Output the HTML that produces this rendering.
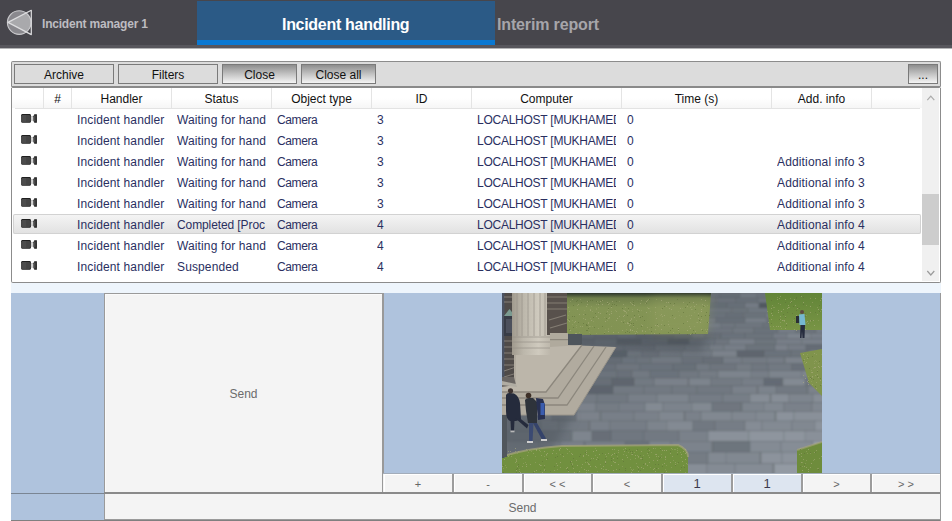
<!DOCTYPE html>
<html><head><meta charset="utf-8">
<style>
*{box-sizing:border-box;margin:0;padding:0}
html,body{width:952px;height:521px;overflow:hidden;background:#fff;font-family:"Liberation Sans",sans-serif;position:relative}
.a{position:absolute}
#hdr{left:0;top:0;width:952px;height:45px;background:#47464c}
#hdrline{left:0;top:45px;width:952px;height:3px;background:#57565c;box-shadow:0 1px 0 #b4b4b6}
#tab{left:197px;top:1px;width:298px;height:39px;background:#2b5a86}
#tabbar{left:197px;top:40px;width:298px;height:5px;background:#0a78d2}
.ttl{font-weight:bold;white-space:nowrap}
#tb{left:11px;top:61px;width:930px;height:27px;border-radius:2px;background:#dcdcdc;border:1px solid #8c8c8c;border-bottom:2px solid #8a8a8a}
.btn{position:absolute;top:2px;height:20px;border:1px solid #7a7a7a;background:#dcdcdc;font-size:12px;color:#111;text-align:center;line-height:20px}
.btn.g{background:linear-gradient(#8e8e8e,#c8c8c8 55%,#f4f4f4)}
#tbl{left:11px;top:88px;width:930px;height:195px;border:1px solid #8c8c8c;border-top:none;background:#fff;border-radius:0 0 2px 2px}
.hc{position:absolute;top:88px;height:20px;padding-top:1px;font-size:12px;color:#111;text-align:center;line-height:20px;border-left:1px solid #e4e4e4}
.row{position:absolute;left:13px;width:908px;height:21px;font-size:12px;color:#2a2f5f}
.c{position:absolute;top:1px;height:21px;line-height:21px;white-space:nowrap;overflow:hidden}
.cam{position:absolute;left:8px;top:5px;width:16px;height:9px}
#sb{left:922px;top:88px;width:17px;height:193px;background:#f0f0f0}
#thumb{left:922px;top:194px;width:17px;height:51px;background:#cdcdcd}
.hc{position:absolute;top:88px}
.row.sel{height:20px;background:linear-gradient(#f5f5f5,#e1e1e1);box-shadow:inset 0 0 0 1px #d2d2d2;border-radius:2px}
.send{font-size:12px;color:#6c6c6c;text-align:center;line-height:14px}
.pb{position:absolute;top:474px;height:18px;box-shadow:inset 1px 1px 0 #fff;font-size:11px;color:#666;text-align:center;line-height:21px}
.pb.blu{background:#dde5f0;font-size:13px;color:#3a3a4e;line-height:19px}
</style></head><body>
<div class="a" id="hdr"></div>
<div class="a" id="hdrline"></div>
<div class="a" id="tab"></div>
<div class="a" id="tabbar"></div>
<svg class="a" style="left:0;top:0" width="40" height="46" viewBox="0 0 40 46">
  <defs><clipPath id="lc"><circle cx="19.2" cy="22.6" r="11.8"/></clipPath></defs>
  <circle cx="19.2" cy="22.6" r="11.8" fill="#8a898e"/>
  <path d="M8 22.4 L31.3 10.3 L31.3 34.6 Z" fill="#a9a9ac" clip-path="url(#lc)"/>
  <circle cx="19.2" cy="22.6" r="11.8" fill="none" stroke="#c9c9cc" stroke-width="1.1"/>
  <path d="M8 22.4 L31.3 10.3 L31.3 34.6 Z" fill="none" stroke="#dedee0" stroke-width="1.2" stroke-linejoin="round"/>
</svg>
<div class="a ttl" style="left:42px;top:17px;font-size:12px;color:#bdbcc1;letter-spacing:-0.2px">Incident manager 1</div>
<div class="a ttl" style="left:282px;top:16px;font-size:16px;color:#fff;letter-spacing:-0.3px">Incident handling</div>
<div class="a ttl" style="left:497px;top:16px;font-size:16px;color:#a6a5aa;letter-spacing:-0.15px">Interim report</div>

<div class="a" id="tb">
  <div class="btn" style="left:2px;width:100px">Archive</div>
  <div class="btn" style="left:106px;width:100px">Filters</div>
  <div class="btn g" style="left:210px;width:75px">Close</div>
  <div class="btn g" style="left:289px;width:75px">Close all</div>
  <div class="btn g" style="left:896px;width:30px">...</div>
</div>

<div class="a" id="tbl"></div>
<div class="a" style="left:12px;top:88px;width:910px;height:20px;background:linear-gradient(#fff,#fff 50%,#f6f6f6)"></div>
<div class="a" style="left:15px;top:108px;width:905px;height:1px;background:#e3e3e3"></div>
<div class="hc" style="left:43px;width:28px">#</div>
<div class="hc" style="left:71px;width:100px">Handler</div>
<div class="hc" style="left:171px;width:100px">Status</div>
<div class="hc" style="left:271px;width:100px">Object type</div>
<div class="hc" style="left:371px;width:100px">ID</div>
<div class="hc" style="left:471px;width:150px">Computer</div>
<div class="hc" style="left:621px;width:150px">Time (s)</div>
<div class="hc" style="left:771px;width:100px">Add. info</div>
<div class="hc" style="left:871px;width:49px;border-right:none"></div>
<div class="a" id="sb"></div>
<div class="a" id="thumb"></div>
<svg class="a" style="left:924px;top:92px" width="14" height="12" viewBox="0 0 14 12"><path d="M3.3 8.2 L6.8 4.2 L10.3 8.2" fill="none" stroke="#ababab" stroke-width="1.2"/></svg>
<svg class="a" style="left:924px;top:267px" width="14" height="12" viewBox="0 0 14 12"><path d="M3.3 4 L6.8 8 L10.3 4" fill="none" stroke="#9a9a9a" stroke-width="1.2"/></svg>

<div class="a row" style="top:109px"><svg class="cam" width="16" height="9" viewBox="0 0 16 9"><rect x="0.2" y="0.1" width="9.7" height="8.7" rx="1.2" fill="#1f1f1f"/><rect x="1.1" y="1" width="7.9" height="6.9" rx="0.6" fill="#444"/><rect x="1.1" y="1" width="4" height="6.9" fill="#4c4c4c"/><rect x="9.9" y="2.2" width="2.5" height="4.4" fill="#b4b4b4"/><rect x="10.5" y="3" width="1.2" height="2.8" fill="#e6e6e6"/><path d="M12.4 2.2 L13.4 0.2 H15.9 V8.8 H13.4 L12.4 6.8 Z" fill="#1c1c1c"/><rect x="13.4" y="1.4" width="1" height="6.2" fill="#6a6a6a"/></svg><div class="c" style="left:64px;width:89px;letter-spacing:0.13px">Incident handler</div><div class="c" style="left:164px;width:89px;letter-spacing:0.13px">Waiting for handling</div><div class="c" style="left:264px;width:89px;letter-spacing:-0.4px">Camera</div><div class="c" style="left:364px;width:89px">3</div><div class="c" style="left:464px;width:139px;letter-spacing:-0.25px">LOCALHOST [MUKHAMEDOV]</div><div class="c" style="left:614px;width:139px">0</div></div>
<div class="a row" style="top:130px"><svg class="cam" width="16" height="9" viewBox="0 0 16 9"><rect x="0.2" y="0.1" width="9.7" height="8.7" rx="1.2" fill="#1f1f1f"/><rect x="1.1" y="1" width="7.9" height="6.9" rx="0.6" fill="#444"/><rect x="1.1" y="1" width="4" height="6.9" fill="#4c4c4c"/><rect x="9.9" y="2.2" width="2.5" height="4.4" fill="#b4b4b4"/><rect x="10.5" y="3" width="1.2" height="2.8" fill="#e6e6e6"/><path d="M12.4 2.2 L13.4 0.2 H15.9 V8.8 H13.4 L12.4 6.8 Z" fill="#1c1c1c"/><rect x="13.4" y="1.4" width="1" height="6.2" fill="#6a6a6a"/></svg><div class="c" style="left:64px;width:89px;letter-spacing:0.13px">Incident handler</div><div class="c" style="left:164px;width:89px;letter-spacing:0.13px">Waiting for handling</div><div class="c" style="left:264px;width:89px;letter-spacing:-0.4px">Camera</div><div class="c" style="left:364px;width:89px">3</div><div class="c" style="left:464px;width:139px;letter-spacing:-0.25px">LOCALHOST [MUKHAMEDOV]</div><div class="c" style="left:614px;width:139px">0</div></div>
<div class="a row" style="top:151px"><svg class="cam" width="16" height="9" viewBox="0 0 16 9"><rect x="0.2" y="0.1" width="9.7" height="8.7" rx="1.2" fill="#1f1f1f"/><rect x="1.1" y="1" width="7.9" height="6.9" rx="0.6" fill="#444"/><rect x="1.1" y="1" width="4" height="6.9" fill="#4c4c4c"/><rect x="9.9" y="2.2" width="2.5" height="4.4" fill="#b4b4b4"/><rect x="10.5" y="3" width="1.2" height="2.8" fill="#e6e6e6"/><path d="M12.4 2.2 L13.4 0.2 H15.9 V8.8 H13.4 L12.4 6.8 Z" fill="#1c1c1c"/><rect x="13.4" y="1.4" width="1" height="6.2" fill="#6a6a6a"/></svg><div class="c" style="left:64px;width:89px;letter-spacing:0.13px">Incident handler</div><div class="c" style="left:164px;width:89px;letter-spacing:0.13px">Waiting for handling</div><div class="c" style="left:264px;width:89px;letter-spacing:-0.4px">Camera</div><div class="c" style="left:364px;width:89px">3</div><div class="c" style="left:464px;width:139px;letter-spacing:-0.25px">LOCALHOST [MUKHAMEDOV]</div><div class="c" style="left:614px;width:139px">0</div><div class="c" style="left:764px;width:89px;letter-spacing:0.15px">Additional info 3</div></div>
<div class="a row" style="top:172px"><svg class="cam" width="16" height="9" viewBox="0 0 16 9"><rect x="0.2" y="0.1" width="9.7" height="8.7" rx="1.2" fill="#1f1f1f"/><rect x="1.1" y="1" width="7.9" height="6.9" rx="0.6" fill="#444"/><rect x="1.1" y="1" width="4" height="6.9" fill="#4c4c4c"/><rect x="9.9" y="2.2" width="2.5" height="4.4" fill="#b4b4b4"/><rect x="10.5" y="3" width="1.2" height="2.8" fill="#e6e6e6"/><path d="M12.4 2.2 L13.4 0.2 H15.9 V8.8 H13.4 L12.4 6.8 Z" fill="#1c1c1c"/><rect x="13.4" y="1.4" width="1" height="6.2" fill="#6a6a6a"/></svg><div class="c" style="left:64px;width:89px;letter-spacing:0.13px">Incident handler</div><div class="c" style="left:164px;width:89px;letter-spacing:0.13px">Waiting for handling</div><div class="c" style="left:264px;width:89px;letter-spacing:-0.4px">Camera</div><div class="c" style="left:364px;width:89px">3</div><div class="c" style="left:464px;width:139px;letter-spacing:-0.25px">LOCALHOST [MUKHAMEDOV]</div><div class="c" style="left:614px;width:139px">0</div><div class="c" style="left:764px;width:89px;letter-spacing:0.15px">Additional info 3</div></div>
<div class="a row" style="top:193px"><svg class="cam" width="16" height="9" viewBox="0 0 16 9"><rect x="0.2" y="0.1" width="9.7" height="8.7" rx="1.2" fill="#1f1f1f"/><rect x="1.1" y="1" width="7.9" height="6.9" rx="0.6" fill="#444"/><rect x="1.1" y="1" width="4" height="6.9" fill="#4c4c4c"/><rect x="9.9" y="2.2" width="2.5" height="4.4" fill="#b4b4b4"/><rect x="10.5" y="3" width="1.2" height="2.8" fill="#e6e6e6"/><path d="M12.4 2.2 L13.4 0.2 H15.9 V8.8 H13.4 L12.4 6.8 Z" fill="#1c1c1c"/><rect x="13.4" y="1.4" width="1" height="6.2" fill="#6a6a6a"/></svg><div class="c" style="left:64px;width:89px;letter-spacing:0.13px">Incident handler</div><div class="c" style="left:164px;width:89px;letter-spacing:0.13px">Waiting for handling</div><div class="c" style="left:264px;width:89px;letter-spacing:-0.4px">Camera</div><div class="c" style="left:364px;width:89px">3</div><div class="c" style="left:464px;width:139px;letter-spacing:-0.25px">LOCALHOST [MUKHAMEDOV]</div><div class="c" style="left:614px;width:139px">0</div><div class="c" style="left:764px;width:89px;letter-spacing:0.15px">Additional info 3</div></div>
<div class="a row sel" style="top:214px"><svg class="cam" width="16" height="9" viewBox="0 0 16 9"><rect x="0.2" y="0.1" width="9.7" height="8.7" rx="1.2" fill="#1f1f1f"/><rect x="1.1" y="1" width="7.9" height="6.9" rx="0.6" fill="#444"/><rect x="1.1" y="1" width="4" height="6.9" fill="#4c4c4c"/><rect x="9.9" y="2.2" width="2.5" height="4.4" fill="#b4b4b4"/><rect x="10.5" y="3" width="1.2" height="2.8" fill="#e6e6e6"/><path d="M12.4 2.2 L13.4 0.2 H15.9 V8.8 H13.4 L12.4 6.8 Z" fill="#1c1c1c"/><rect x="13.4" y="1.4" width="1" height="6.2" fill="#6a6a6a"/></svg><div class="c" style="left:64px;width:89px;letter-spacing:0.13px">Incident handler</div><div class="c" style="left:164px;width:88px;letter-spacing:-0.1px">Completed [Processed]</div><div class="c" style="left:264px;width:89px;letter-spacing:-0.4px">Camera</div><div class="c" style="left:364px;width:89px">4</div><div class="c" style="left:464px;width:139px;letter-spacing:-0.25px">LOCALHOST [MUKHAMEDOV]</div><div class="c" style="left:614px;width:139px">0</div><div class="c" style="left:764px;width:89px;letter-spacing:0.15px">Additional info 4</div></div>
<div class="a row" style="top:235px"><svg class="cam" width="16" height="9" viewBox="0 0 16 9"><rect x="0.2" y="0.1" width="9.7" height="8.7" rx="1.2" fill="#1f1f1f"/><rect x="1.1" y="1" width="7.9" height="6.9" rx="0.6" fill="#444"/><rect x="1.1" y="1" width="4" height="6.9" fill="#4c4c4c"/><rect x="9.9" y="2.2" width="2.5" height="4.4" fill="#b4b4b4"/><rect x="10.5" y="3" width="1.2" height="2.8" fill="#e6e6e6"/><path d="M12.4 2.2 L13.4 0.2 H15.9 V8.8 H13.4 L12.4 6.8 Z" fill="#1c1c1c"/><rect x="13.4" y="1.4" width="1" height="6.2" fill="#6a6a6a"/></svg><div class="c" style="left:64px;width:89px;letter-spacing:0.13px">Incident handler</div><div class="c" style="left:164px;width:89px;letter-spacing:0.13px">Waiting for handling</div><div class="c" style="left:264px;width:89px;letter-spacing:-0.4px">Camera</div><div class="c" style="left:364px;width:89px">4</div><div class="c" style="left:464px;width:139px;letter-spacing:-0.25px">LOCALHOST [MUKHAMEDOV]</div><div class="c" style="left:614px;width:139px">0</div><div class="c" style="left:764px;width:89px;letter-spacing:0.15px">Additional info 4</div></div>
<div class="a row" style="top:256px"><svg class="cam" width="16" height="9" viewBox="0 0 16 9"><rect x="0.2" y="0.1" width="9.7" height="8.7" rx="1.2" fill="#1f1f1f"/><rect x="1.1" y="1" width="7.9" height="6.9" rx="0.6" fill="#444"/><rect x="1.1" y="1" width="4" height="6.9" fill="#4c4c4c"/><rect x="9.9" y="2.2" width="2.5" height="4.4" fill="#b4b4b4"/><rect x="10.5" y="3" width="1.2" height="2.8" fill="#e6e6e6"/><path d="M12.4 2.2 L13.4 0.2 H15.9 V8.8 H13.4 L12.4 6.8 Z" fill="#1c1c1c"/><rect x="13.4" y="1.4" width="1" height="6.2" fill="#6a6a6a"/></svg><div class="c" style="left:64px;width:89px;letter-spacing:0.13px">Incident handler</div><div class="c" style="left:164px;width:89px;letter-spacing:0.13px">Suspended</div><div class="c" style="left:264px;width:89px;letter-spacing:-0.4px">Camera</div><div class="c" style="left:364px;width:89px">4</div><div class="c" style="left:464px;width:139px;letter-spacing:-0.25px">LOCALHOST [MUKHAMEDOV]</div><div class="c" style="left:614px;width:139px">0</div><div class="c" style="left:764px;width:89px;letter-spacing:0.15px">Additional info 4</div></div>


<div class="a" style="left:11px;top:283px;width:930px;height:10px;background:#eef5fc"></div>
<div class="a" style="left:11px;top:293px;width:930px;height:228px;background:#afc3dd"></div>
<div class="a" style="left:104px;top:293px;width:280px;height:200px;background:#f4f4f4;border-left:1px solid #9a9a9a;border-top:1px solid #9a9a9a;border-right:2px solid #999;box-shadow:inset 1px 1px 0 #fafafa"></div>
<div class="a send" style="left:104px;top:387px;width:279px">Send</div>
<div class="a" id="photo" style="left:502px;top:293px;width:320px;height:180px;background:#6e7479;overflow:hidden"><svg width="320" height="180" viewBox="0 0 320 180" style="position:absolute;left:0;top:0">
<defs>
<linearGradient id="gr1" x1="0" y1="0" x2="0" y2="1">
<stop offset="0" stop-color="#2c352c"/><stop offset="0.12" stop-color="#6f7f4c"/><stop offset="0.35" stop-color="#839455"/><stop offset="1" stop-color="#829353"/>
</linearGradient>
<linearGradient id="gr2" x1="0" y1="0" x2="0" y2="1">
<stop offset="0" stop-color="#628538"/><stop offset="1" stop-color="#789445"/>
</linearGradient>
<linearGradient id="pil" x1="0" y1="0" x2="1" y2="0">
<stop offset="0" stop-color="#a09a8e"/><stop offset="0.3" stop-color="#bcb7ab"/><stop offset="0.7" stop-color="#cfcabe"/><stop offset="1" stop-color="#bdb7ab"/>
</linearGradient>
<filter id="bl" x="-5%" y="-5%" width="110%" height="110%"><feGaussianBlur stdDeviation="0.8"/></filter>
<filter id="bl2" x="-20%" y="-20%" width="140%" height="140%"><feGaussianBlur stdDeviation="5"/></filter>
</defs>
<g stroke="#4f565d" stroke-width="0.6" stroke-opacity="0.35" filter="url(#bl)"><rect x="-14" y="0.0" width="15" height="5.0" fill="#5b626b"/><rect x="1" y="0.0" width="19" height="5.0" fill="#4f565f"/><rect x="20" y="0.0" width="21" height="5.0" fill="#585f68"/><rect x="41" y="0.0" width="14" height="5.0" fill="#626972"/><rect x="55" y="0.0" width="27" height="5.0" fill="#646b74"/><rect x="81" y="0.0" width="29" height="5.0" fill="#606770"/><rect x="110" y="0.0" width="19" height="5.0" fill="#616871"/><rect x="130" y="0.0" width="17" height="5.0" fill="#616871"/><rect x="147" y="0.0" width="14" height="5.0" fill="#5f666f"/><rect x="161" y="0.0" width="22" height="5.0" fill="#6d747d"/><rect x="183" y="0.0" width="19" height="5.0" fill="#565d66"/><rect x="202" y="0.0" width="16" height="5.0" fill="#666d76"/><rect x="218" y="0.0" width="20" height="5.0" fill="#656c75"/><rect x="238" y="0.0" width="17" height="5.0" fill="#707780"/><rect x="255" y="0.0" width="25" height="5.0" fill="#6b727b"/><rect x="280" y="0.0" width="28" height="5.0" fill="#747b84"/><rect x="307" y="0.0" width="17" height="5.0" fill="#717881"/><rect x="-5" y="5.0" width="15" height="5.0" fill="#5e656e"/><rect x="10" y="5.0" width="13" height="5.0" fill="#5a616a"/><rect x="23" y="5.0" width="28" height="5.0" fill="#585f68"/><rect x="50" y="5.0" width="25" height="5.0" fill="#5c636c"/><rect x="75" y="5.0" width="27" height="5.0" fill="#5a616a"/><rect x="102" y="5.0" width="21" height="5.0" fill="#5f666f"/><rect x="123" y="5.0" width="24" height="5.0" fill="#606770"/><rect x="146" y="5.0" width="27" height="5.0" fill="#626972"/><rect x="173" y="5.0" width="12" height="5.0" fill="#6b727b"/><rect x="185" y="5.0" width="15" height="5.0" fill="#686f78"/><rect x="200" y="5.0" width="14" height="5.0" fill="#697079"/><rect x="215" y="5.0" width="19" height="5.0" fill="#6a717a"/><rect x="234" y="5.0" width="22" height="5.0" fill="#686f78"/><rect x="256" y="5.0" width="27" height="5.0" fill="#6e757e"/><rect x="282" y="5.0" width="18" height="5.0" fill="#6a717a"/><rect x="301" y="5.0" width="29" height="5.0" fill="#717881"/><rect x="-15" y="10.0" width="21" height="5.0" fill="#616871"/><rect x="5" y="10.0" width="17" height="5.0" fill="#656c75"/><rect x="22" y="10.0" width="22" height="5.0" fill="#616871"/><rect x="44" y="10.0" width="24" height="5.0" fill="#5b626b"/><rect x="69" y="10.0" width="13" height="5.0" fill="#5d646d"/><rect x="82" y="10.0" width="26" height="5.0" fill="#666d76"/><rect x="108" y="10.0" width="19" height="5.0" fill="#4d545d"/><rect x="127" y="10.0" width="23" height="5.0" fill="#646b74"/><rect x="150" y="10.0" width="15" height="5.0" fill="#656c75"/><rect x="165" y="10.0" width="13" height="5.0" fill="#5c636c"/><rect x="178" y="10.0" width="19" height="5.0" fill="#596069"/><rect x="197" y="10.0" width="28" height="5.0" fill="#656c75"/><rect x="225" y="10.0" width="18" height="5.0" fill="#686f78"/><rect x="243" y="10.0" width="14" height="5.0" fill="#757c85"/><rect x="257" y="10.0" width="21" height="5.0" fill="#515861"/><rect x="278" y="10.0" width="14" height="5.0" fill="#6c737c"/><rect x="292" y="10.0" width="15" height="5.0" fill="#666d76"/><rect x="306" y="10.0" width="29" height="5.0" fill="#6d747d"/><rect x="-19" y="15.0" width="22" height="5.0" fill="#5e656e"/><rect x="2" y="15.0" width="28" height="5.0" fill="#5f666f"/><rect x="30" y="15.0" width="15" height="5.0" fill="#5e656e"/><rect x="45" y="15.0" width="22" height="5.0" fill="#646b74"/><rect x="66" y="15.0" width="27" height="5.0" fill="#5a616a"/><rect x="93" y="15.0" width="27" height="5.0" fill="#646b74"/><rect x="120" y="15.0" width="16" height="5.0" fill="#596069"/><rect x="136" y="15.0" width="18" height="5.0" fill="#656c75"/><rect x="155" y="15.0" width="17" height="5.0" fill="#666d76"/><rect x="171" y="15.0" width="29" height="5.0" fill="#5a616a"/><rect x="200" y="15.0" width="29" height="5.0" fill="#6d747d"/><rect x="230" y="15.0" width="16" height="5.0" fill="#6c737c"/><rect x="246" y="15.0" width="23" height="5.0" fill="#707780"/><rect x="269" y="15.0" width="27" height="5.0" fill="#666d76"/><rect x="296" y="15.0" width="14" height="5.0" fill="#717881"/><rect x="310" y="15.0" width="28" height="5.0" fill="#737a83"/><rect x="-16" y="20.0" width="26" height="5.0" fill="#565d66"/><rect x="10" y="20.0" width="26" height="5.0" fill="#676e77"/><rect x="36" y="20.0" width="29" height="5.0" fill="#626972"/><rect x="65" y="20.0" width="15" height="5.0" fill="#626972"/><rect x="80" y="20.0" width="27" height="5.0" fill="#636a73"/><rect x="107" y="20.0" width="27" height="5.0" fill="#6b727b"/><rect x="134" y="20.0" width="22" height="5.0" fill="#646b74"/><rect x="156" y="20.0" width="12" height="5.0" fill="#6e757e"/><rect x="168" y="20.0" width="29" height="5.0" fill="#666d76"/><rect x="197" y="20.0" width="28" height="5.0" fill="#6b727b"/><rect x="224" y="20.0" width="17" height="5.0" fill="#686f78"/><rect x="242" y="20.0" width="23" height="5.0" fill="#6c737c"/><rect x="264" y="20.0" width="28" height="5.0" fill="#747b84"/><rect x="293" y="20.0" width="20" height="5.0" fill="#666d76"/><rect x="313" y="20.0" width="29" height="5.0" fill="#6c737c"/><rect x="-9" y="25.0" width="21" height="5.0" fill="#676e77"/><rect x="12" y="25.0" width="12" height="5.0" fill="#636a73"/><rect x="24" y="25.0" width="15" height="5.0" fill="#5a616a"/><rect x="39" y="25.0" width="18" height="5.0" fill="#666d76"/><rect x="57" y="25.0" width="22" height="5.0" fill="#666d76"/><rect x="79" y="25.0" width="16" height="5.0" fill="#5f666f"/><rect x="96" y="25.0" width="26" height="5.0" fill="#5c636c"/><rect x="121" y="25.0" width="28" height="5.0" fill="#646b74"/><rect x="150" y="25.0" width="23" height="5.0" fill="#606770"/><rect x="173" y="25.0" width="20" height="5.0" fill="#686f78"/><rect x="193" y="25.0" width="21" height="5.0" fill="#727982"/><rect x="214" y="25.0" width="29" height="5.0" fill="#686f78"/><rect x="243" y="25.0" width="22" height="5.0" fill="#777e87"/><rect x="265" y="25.0" width="14" height="5.0" fill="#6c737c"/><rect x="279" y="25.0" width="13" height="5.0" fill="#707780"/><rect x="292" y="25.0" width="26" height="5.0" fill="#737a83"/><rect x="318" y="25.0" width="15" height="5.0" fill="#727982"/><rect x="-2" y="30.0" width="29" height="5.0" fill="#5a616a"/><rect x="27" y="30.0" width="29" height="5.0" fill="#5f666f"/><rect x="56" y="30.0" width="27" height="5.0" fill="#6a717a"/><rect x="83" y="30.0" width="20" height="5.0" fill="#5d646d"/><rect x="103" y="30.0" width="18" height="5.0" fill="#636a73"/><rect x="121" y="30.0" width="12" height="5.0" fill="#535a63"/><rect x="133" y="30.0" width="18" height="5.0" fill="#646b74"/><rect x="151" y="30.0" width="21" height="5.0" fill="#767d86"/><rect x="172" y="30.0" width="29" height="5.0" fill="#626972"/><rect x="202" y="30.0" width="17" height="5.0" fill="#757c85"/><rect x="219" y="30.0" width="14" height="5.0" fill="#6f767f"/><rect x="233" y="30.0" width="28" height="5.0" fill="#6f767f"/><rect x="261" y="30.0" width="29" height="5.0" fill="#6c737c"/><rect x="290" y="30.0" width="25" height="5.0" fill="#747b84"/><rect x="314" y="30.0" width="20" height="5.0" fill="#686f78"/><rect x="-1" y="35.0" width="23" height="5.2" fill="#646b74"/><rect x="22" y="35.0" width="13" height="5.2" fill="#626972"/><rect x="35" y="35.0" width="20" height="5.2" fill="#626972"/><rect x="56" y="35.0" width="17" height="5.2" fill="#6d747d"/><rect x="72" y="35.0" width="21" height="5.2" fill="#636a73"/><rect x="94" y="35.0" width="13" height="5.2" fill="#676e77"/><rect x="107" y="35.0" width="18" height="5.2" fill="#626972"/><rect x="124" y="35.0" width="21" height="5.2" fill="#6f767f"/><rect x="145" y="35.0" width="18" height="5.2" fill="#5f666f"/><rect x="164" y="35.0" width="25" height="5.2" fill="#6a717a"/><rect x="189" y="35.0" width="15" height="5.2" fill="#515861"/><rect x="204" y="35.0" width="27" height="5.2" fill="#6e757e"/><rect x="231" y="35.0" width="21" height="5.2" fill="#717881"/><rect x="252" y="35.0" width="24" height="5.2" fill="#6b727b"/><rect x="276" y="35.0" width="18" height="5.2" fill="#767d86"/><rect x="294" y="35.0" width="19" height="5.2" fill="#6c737c"/><rect x="314" y="35.0" width="13" height="5.2" fill="#767d86"/><rect x="-15" y="40.2" width="15" height="5.5" fill="#575e67"/><rect x="0" y="40.2" width="27" height="5.5" fill="#697079"/><rect x="27" y="40.2" width="16" height="5.5" fill="#606770"/><rect x="44" y="40.2" width="20" height="5.5" fill="#6a717a"/><rect x="64" y="40.2" width="29" height="5.5" fill="#686f78"/><rect x="93" y="40.2" width="22" height="5.5" fill="#656c75"/><rect x="115" y="40.2" width="18" height="5.5" fill="#686f78"/><rect x="134" y="40.2" width="19" height="5.5" fill="#616871"/><rect x="152" y="40.2" width="21" height="5.5" fill="#5d646d"/><rect x="174" y="40.2" width="17" height="5.5" fill="#626972"/><rect x="190" y="40.2" width="12" height="5.5" fill="#6f767f"/><rect x="203" y="40.2" width="16" height="5.5" fill="#676e77"/><rect x="219" y="40.2" width="24" height="5.5" fill="#6b727b"/><rect x="243" y="40.2" width="28" height="5.5" fill="#6c737c"/><rect x="271" y="40.2" width="15" height="5.5" fill="#757c85"/><rect x="285" y="40.2" width="24" height="5.5" fill="#7d848d"/><rect x="309" y="40.2" width="23" height="5.5" fill="#787f88"/><rect x="-4" y="45.8" width="15" height="5.8" fill="#5e656e"/><rect x="11" y="45.8" width="27" height="5.8" fill="#646b74"/><rect x="38" y="45.8" width="23" height="5.8" fill="#6e757e"/><rect x="61" y="45.8" width="17" height="5.8" fill="#515861"/><rect x="78" y="45.8" width="15" height="5.8" fill="#636a73"/><rect x="92" y="45.8" width="23" height="5.8" fill="#686f78"/><rect x="115" y="45.8" width="24" height="5.8" fill="#585f68"/><rect x="139" y="45.8" width="27" height="5.8" fill="#636a73"/><rect x="166" y="45.8" width="22" height="5.8" fill="#565d66"/><rect x="187" y="45.8" width="26" height="5.8" fill="#6b727b"/><rect x="213" y="45.8" width="14" height="5.8" fill="#6e757e"/><rect x="227" y="45.8" width="26" height="5.8" fill="#787f88"/><rect x="253" y="45.8" width="21" height="5.8" fill="#6d747d"/><rect x="274" y="45.8" width="26" height="5.8" fill="#777e87"/><rect x="300" y="45.8" width="24" height="5.8" fill="#787f88"/><rect x="-5" y="51.6" width="18" height="6.1" fill="#676e77"/><rect x="13" y="51.6" width="13" height="6.1" fill="#6b727b"/><rect x="26" y="51.6" width="26" height="6.1" fill="#697079"/><rect x="52" y="51.6" width="18" height="6.1" fill="#636a73"/><rect x="70" y="51.6" width="15" height="6.1" fill="#646b74"/><rect x="84" y="51.6" width="16" height="6.1" fill="#666d76"/><rect x="101" y="51.6" width="21" height="6.1" fill="#656c75"/><rect x="122" y="51.6" width="31" height="6.1" fill="#656c75"/><rect x="153" y="51.6" width="30" height="6.1" fill="#6c737c"/><rect x="183" y="51.6" width="24" height="6.1" fill="#717881"/><rect x="207" y="51.6" width="15" height="6.1" fill="#747b84"/><rect x="222" y="51.6" width="22" height="6.1" fill="#777e87"/><rect x="244" y="51.6" width="29" height="6.1" fill="#6c737c"/><rect x="273" y="51.6" width="13" height="6.1" fill="#7a818a"/><rect x="286" y="51.6" width="18" height="6.1" fill="#757c85"/><rect x="304" y="51.6" width="19" height="6.1" fill="#656c75"/><rect x="-5" y="57.6" width="29" height="6.4" fill="#707780"/><rect x="24" y="57.6" width="31" height="6.4" fill="#666d76"/><rect x="55" y="57.6" width="20" height="6.4" fill="#5f666f"/><rect x="75" y="57.6" width="32" height="6.4" fill="#626972"/><rect x="107" y="57.6" width="18" height="6.4" fill="#596069"/><rect x="125" y="57.6" width="15" height="6.4" fill="#6c737c"/><rect x="140" y="57.6" width="18" height="6.4" fill="#676e77"/><rect x="157" y="57.6" width="23" height="6.4" fill="#6e757e"/><rect x="180" y="57.6" width="30" height="6.4" fill="#737a83"/><rect x="210" y="57.6" width="25" height="6.4" fill="#7b828b"/><rect x="235" y="57.6" width="27" height="6.4" fill="#5e656e"/><rect x="262" y="57.6" width="27" height="6.4" fill="#6b727b"/><rect x="289" y="57.6" width="18" height="6.4" fill="#6c737c"/><rect x="307" y="57.6" width="31" height="6.4" fill="#7c838c"/><rect x="-14" y="64.0" width="28" height="6.7" fill="#6b727b"/><rect x="14" y="64.0" width="18" height="6.7" fill="#666d76"/><rect x="32" y="64.0" width="21" height="6.7" fill="#666d76"/><rect x="53" y="64.0" width="16" height="6.7" fill="#6f767f"/><rect x="69" y="64.0" width="17" height="6.7" fill="#727982"/><rect x="87" y="64.0" width="33" height="6.7" fill="#656c75"/><rect x="120" y="64.0" width="15" height="6.7" fill="#6b727b"/><rect x="134" y="64.0" width="15" height="6.7" fill="#6c737c"/><rect x="149" y="64.0" width="31" height="6.7" fill="#717881"/><rect x="180" y="64.0" width="21" height="6.7" fill="#697079"/><rect x="201" y="64.0" width="20" height="6.7" fill="#676e77"/><rect x="221" y="64.0" width="19" height="6.7" fill="#757c85"/><rect x="240" y="64.0" width="26" height="6.7" fill="#737a83"/><rect x="265" y="64.0" width="17" height="6.7" fill="#757c85"/><rect x="283" y="64.0" width="22" height="6.7" fill="#7b828b"/><rect x="305" y="64.0" width="30" height="6.7" fill="#6c737c"/><rect x="-6" y="70.7" width="32" height="7.0" fill="#676e77"/><rect x="26" y="70.7" width="25" height="7.0" fill="#707780"/><rect x="51" y="70.7" width="30" height="7.0" fill="#6c737c"/><rect x="81" y="70.7" width="33" height="7.0" fill="#697079"/><rect x="114" y="70.7" width="24" height="7.0" fill="#6e757e"/><rect x="138" y="70.7" width="33" height="7.0" fill="#6b727b"/><rect x="171" y="70.7" width="23" height="7.0" fill="#686f78"/><rect x="194" y="70.7" width="14" height="7.0" fill="#727982"/><rect x="208" y="70.7" width="27" height="7.0" fill="#6e757e"/><rect x="234" y="70.7" width="16" height="7.0" fill="#747b84"/><rect x="250" y="70.7" width="16" height="7.0" fill="#707780"/><rect x="266" y="70.7" width="24" height="7.0" fill="#727982"/><rect x="290" y="70.7" width="26" height="7.0" fill="#697079"/><rect x="316" y="70.7" width="20" height="7.0" fill="#6d747d"/><rect x="-2" y="77.7" width="24" height="7.4" fill="#6d747d"/><rect x="21" y="77.7" width="19" height="7.4" fill="#747b84"/><rect x="40" y="77.7" width="14" height="7.4" fill="#6b727b"/><rect x="55" y="77.7" width="28" height="7.4" fill="#6a717a"/><rect x="82" y="77.7" width="33" height="7.4" fill="#6c737c"/><rect x="115" y="77.7" width="15" height="7.4" fill="#697079"/><rect x="130" y="77.7" width="18" height="7.4" fill="#727982"/><rect x="148" y="77.7" width="29" height="7.4" fill="#6b727b"/><rect x="177" y="77.7" width="20" height="7.4" fill="#717881"/><rect x="197" y="77.7" width="19" height="7.4" fill="#747b84"/><rect x="216" y="77.7" width="34" height="7.4" fill="#7d848d"/><rect x="249" y="77.7" width="18" height="7.4" fill="#777e87"/><rect x="267" y="77.7" width="33" height="7.4" fill="#7d848d"/><rect x="300" y="77.7" width="22" height="7.4" fill="#7e858e"/><rect x="-19" y="85.1" width="15" height="7.8" fill="#787f88"/><rect x="-4" y="85.1" width="33" height="7.8" fill="#717881"/><rect x="30" y="85.1" width="34" height="7.8" fill="#676e77"/><rect x="64" y="85.1" width="18" height="7.8" fill="#656c75"/><rect x="82" y="85.1" width="28" height="7.8" fill="#676e77"/><rect x="110" y="85.1" width="22" height="7.8" fill="#5e656e"/><rect x="132" y="85.1" width="20" height="7.8" fill="#727982"/><rect x="152" y="85.1" width="34" height="7.8" fill="#7a818a"/><rect x="187" y="85.1" width="22" height="7.8" fill="#7d848d"/><rect x="209" y="85.1" width="32" height="7.8" fill="#737a83"/><rect x="240" y="85.1" width="22" height="7.8" fill="#777e87"/><rect x="262" y="85.1" width="18" height="7.8" fill="#646b74"/><rect x="281" y="85.1" width="23" height="7.8" fill="#838a93"/><rect x="303" y="85.1" width="30" height="7.8" fill="#707780"/><rect x="-2" y="92.9" width="20" height="8.1" fill="#6c737c"/><rect x="19" y="92.9" width="34" height="8.1" fill="#6b727b"/><rect x="53" y="92.9" width="28" height="8.1" fill="#747b84"/><rect x="81" y="92.9" width="30" height="8.1" fill="#5d646d"/><rect x="111" y="92.9" width="31" height="8.1" fill="#727982"/><rect x="142" y="92.9" width="28" height="8.1" fill="#727982"/><rect x="170" y="92.9" width="25" height="8.1" fill="#727982"/><rect x="195" y="92.9" width="35" height="8.1" fill="#717881"/><rect x="230" y="92.9" width="25" height="8.1" fill="#7a818a"/><rect x="256" y="92.9" width="19" height="8.1" fill="#7c838c"/><rect x="274" y="92.9" width="31" height="8.1" fill="#727982"/><rect x="306" y="92.9" width="22" height="8.1" fill="#7b828b"/><rect x="-18" y="101.0" width="19" height="8.6" fill="#717881"/><rect x="1" y="101.0" width="20" height="8.6" fill="#6f767f"/><rect x="21" y="101.0" width="22" height="8.6" fill="#6f767f"/><rect x="44" y="101.0" width="35" height="8.6" fill="#686f78"/><rect x="78" y="101.0" width="17" height="8.6" fill="#737a83"/><rect x="95" y="101.0" width="31" height="8.6" fill="#717881"/><rect x="126" y="101.0" width="29" height="8.6" fill="#787f88"/><rect x="155" y="101.0" width="32" height="8.6" fill="#7d848d"/><rect x="187" y="101.0" width="34" height="8.6" fill="#757c85"/><rect x="221" y="101.0" width="28" height="8.6" fill="#777e87"/><rect x="248" y="101.0" width="20" height="8.6" fill="#868d96"/><rect x="269" y="101.0" width="18" height="8.6" fill="#878e97"/><rect x="287" y="101.0" width="24" height="8.6" fill="#7e858e"/><rect x="311" y="101.0" width="26" height="8.6" fill="#868d96"/><rect x="-0" y="109.6" width="18" height="9.0" fill="#787f88"/><rect x="18" y="109.6" width="34" height="9.0" fill="#697079"/><rect x="52" y="109.6" width="22" height="9.0" fill="#5b626b"/><rect x="74" y="109.6" width="20" height="9.0" fill="#7b828b"/><rect x="94" y="109.6" width="24" height="9.0" fill="#747b84"/><rect x="117" y="109.6" width="26" height="9.0" fill="#777e87"/><rect x="143" y="109.6" width="18" height="9.0" fill="#838a93"/><rect x="161" y="109.6" width="30" height="9.0" fill="#7c838c"/><rect x="190" y="109.6" width="20" height="9.0" fill="#828992"/><rect x="210" y="109.6" width="29" height="9.0" fill="#6f767f"/><rect x="240" y="109.6" width="23" height="9.0" fill="#7d848d"/><rect x="262" y="109.6" width="20" height="9.0" fill="#818891"/><rect x="282" y="109.6" width="28" height="9.0" fill="#7a818a"/><rect x="310" y="109.6" width="18" height="9.0" fill="#808790"/><rect x="-18" y="118.6" width="20" height="9.4" fill="#737a83"/><rect x="1" y="118.6" width="25" height="9.4" fill="#6f767f"/><rect x="27" y="118.6" width="23" height="9.4" fill="#777e87"/><rect x="50" y="118.6" width="24" height="9.4" fill="#6a717a"/><rect x="74" y="118.6" width="24" height="9.4" fill="#7b828b"/><rect x="99" y="118.6" width="33" height="9.4" fill="#787f88"/><rect x="132" y="118.6" width="26" height="9.4" fill="#7a818a"/><rect x="157" y="118.6" width="25" height="9.4" fill="#808790"/><rect x="183" y="118.6" width="16" height="9.4" fill="#7a818a"/><rect x="199" y="118.6" width="31" height="9.4" fill="#818891"/><rect x="230" y="118.6" width="25" height="9.4" fill="#808790"/><rect x="254" y="118.6" width="19" height="9.4" fill="#828992"/><rect x="274" y="118.6" width="18" height="9.4" fill="#8b929b"/><rect x="292" y="118.6" width="35" height="9.4" fill="#899099"/><rect x="-1" y="128.0" width="40" height="9.9" fill="#717881"/><rect x="39" y="128.0" width="18" height="9.9" fill="#798089"/><rect x="56" y="128.0" width="31" height="9.9" fill="#737a83"/><rect x="88" y="128.0" width="20" height="9.9" fill="#798089"/><rect x="108" y="128.0" width="37" height="9.9" fill="#767d86"/><rect x="145" y="128.0" width="21" height="9.9" fill="#7d848d"/><rect x="165" y="128.0" width="26" height="9.9" fill="#838a93"/><rect x="191" y="128.0" width="22" height="9.9" fill="#717881"/><rect x="213" y="128.0" width="30" height="9.9" fill="#767d86"/><rect x="243" y="128.0" width="17" height="9.9" fill="#858c95"/><rect x="260" y="128.0" width="30" height="9.9" fill="#838a93"/><rect x="290" y="128.0" width="24" height="9.9" fill="#818891"/><rect x="313" y="128.0" width="32" height="9.9" fill="#8c939c"/><rect x="-11" y="137.9" width="17" height="10.4" fill="#6d747d"/><rect x="6" y="137.9" width="36" height="10.4" fill="#6f767f"/><rect x="42" y="137.9" width="28" height="10.4" fill="#6c737c"/><rect x="70" y="137.9" width="20" height="10.4" fill="#7e858e"/><rect x="90" y="137.9" width="19" height="10.4" fill="#676e77"/><rect x="109" y="137.9" width="33" height="10.4" fill="#707780"/><rect x="142" y="137.9" width="35" height="10.4" fill="#727982"/><rect x="177" y="137.9" width="29" height="10.4" fill="#7a818a"/><rect x="206" y="137.9" width="41" height="10.4" fill="#8a919a"/><rect x="247" y="137.9" width="35" height="10.4" fill="#8e959e"/><rect x="282" y="137.9" width="22" height="10.4" fill="#8e959e"/><rect x="303" y="137.9" width="40" height="10.4" fill="#899099"/><rect x="-4" y="148.3" width="41" height="10.9" fill="#798089"/><rect x="37" y="148.3" width="21" height="10.9" fill="#798089"/><rect x="58" y="148.3" width="24" height="10.9" fill="#7a818a"/><rect x="83" y="148.3" width="41" height="10.9" fill="#787f88"/><rect x="123" y="148.3" width="24" height="10.9" fill="#6c737c"/><rect x="147" y="148.3" width="22" height="10.9" fill="#7f868f"/><rect x="169" y="148.3" width="41" height="10.9" fill="#7c838c"/><rect x="211" y="148.3" width="37" height="10.9" fill="#6d747d"/><rect x="248" y="148.3" width="31" height="10.9" fill="#848b94"/><rect x="279" y="148.3" width="32" height="10.9" fill="#868d96"/><rect x="311" y="148.3" width="40" height="10.9" fill="#9aa1aa"/><rect x="-12" y="159.2" width="39" height="11.5" fill="#808790"/><rect x="27" y="159.2" width="44" height="11.5" fill="#747b84"/><rect x="71" y="159.2" width="29" height="11.5" fill="#798089"/><rect x="100" y="159.2" width="37" height="11.5" fill="#888f98"/><rect x="138" y="159.2" width="35" height="11.5" fill="#848b94"/><rect x="173" y="159.2" width="33" height="11.5" fill="#747b84"/><rect x="206" y="159.2" width="19" height="11.5" fill="#828992"/><rect x="224" y="159.2" width="34" height="11.5" fill="#818891"/><rect x="259" y="159.2" width="21" height="11.5" fill="#8c939c"/><rect x="280" y="159.2" width="35" height="11.5" fill="#8c939c"/><rect x="315" y="159.2" width="21" height="11.5" fill="#8e959e"/><rect x="-16" y="170.7" width="34" height="12.0" fill="#747b84"/><rect x="19" y="170.7" width="31" height="12.0" fill="#777e87"/><rect x="50" y="170.7" width="44" height="12.0" fill="#6f767f"/><rect x="94" y="170.7" width="36" height="12.0" fill="#828992"/><rect x="130" y="170.7" width="40" height="12.0" fill="#717881"/><rect x="169" y="170.7" width="36" height="12.0" fill="#878e97"/><rect x="205" y="170.7" width="28" height="12.0" fill="#848b94"/><rect x="233" y="170.7" width="38" height="12.0" fill="#858c95"/><rect x="272" y="170.7" width="43" height="12.0" fill="#939aa3"/><rect x="315" y="170.7" width="25" height="12.0" fill="#848b94"/></g>
<path d="M0 122 L72 122 L60 140 L50 160 L0 165 Z" fill="#4e555c" opacity="0.5" filter="url(#bl2)"/>
<path d="M66 41 L206 41 L200 60 L114 54 L66 52 Z" fill="#474e55" opacity="0.45" filter="url(#bl2)"/>
<!-- grass upper left -->
<path d="M58 0 L209 0 L206 41 L66 42 L58 40 Z" fill="url(#gr1)"/>
<!-- grass upper right -->
<path d="M263 0 L320 0 L320 37 L268 37 Z" fill="url(#gr2)"/>
<path d="M150 4 L209 3 L206 41 L150 41 Z" fill="#94a062" opacity="0.35" filter="url(#bl2)"/>
<!-- grass right middle -->
<path d="M298 60 L320 56 L320 103 L307 90 Z" fill="#80944c"/>
<!-- grass bottom left -->
<path d="M0 164 Q20 156 60 153 L176 152 Q186 156 186 164 L186 180 L0 180 Z" fill="#71903f"/>
<path d="M0 164 Q20 156 60 153 L176 152 Q186 156 186 164" fill="none" stroke="#a6a57c" stroke-width="2" opacity="0.7"/>
<!-- grass bottom right -->
<path d="M295 157 L320 149 L320 180 L295 180 Z" fill="#6e8c3c"/>
<path d="M295 157 L320 149" fill="none" stroke="#a6a57c" stroke-width="2" opacity="0.6"/>
<g opacity="0.55"><rect x="94" y="23" width="1" height="1" fill="#b3b287"/><rect x="196" y="20" width="1" height="1" fill="#a9ad7a"/><rect x="149" y="38" width="1" height="1" fill="#5e7038"/><rect x="97" y="10" width="1" height="1" fill="#5e7038"/><rect x="140" y="23" width="1" height="1" fill="#5e7038"/><rect x="154" y="6" width="1" height="1" fill="#9aa46a"/><rect x="189" y="22" width="1" height="1" fill="#a9ad7a"/><rect x="172" y="25" width="1" height="1" fill="#b3b287"/><rect x="176" y="35" width="1" height="1" fill="#b3b287"/><rect x="129" y="30" width="1" height="1" fill="#5e7038"/><rect x="166" y="39" width="1" height="1" fill="#5e7038"/><rect x="168" y="24" width="1" height="1" fill="#9aa46a"/><rect x="79" y="9" width="1" height="1" fill="#5e7038"/><rect x="176" y="36" width="1" height="1" fill="#5e7038"/><rect x="135" y="16" width="1" height="1" fill="#b3b287"/><rect x="139" y="17" width="1" height="1" fill="#9aa46a"/><rect x="195" y="29" width="1" height="1" fill="#a9ad7a"/><rect x="159" y="7" width="1" height="1" fill="#b3b287"/><rect x="204" y="38" width="1" height="1" fill="#a9ad7a"/><rect x="166" y="9" width="1" height="1" fill="#b3b287"/><rect x="71" y="34" width="1" height="1" fill="#5e7038"/><rect x="122" y="17" width="1" height="1" fill="#a9ad7a"/><rect x="65" y="26" width="1" height="1" fill="#a9ad7a"/><rect x="115" y="25" width="1" height="1" fill="#b3b287"/><rect x="88" y="17" width="1" height="1" fill="#b3b287"/><rect x="189" y="13" width="1" height="1" fill="#9aa46a"/><rect x="193" y="16" width="1" height="1" fill="#5e7038"/><rect x="189" y="16" width="1" height="1" fill="#a9ad7a"/><rect x="152" y="40" width="1" height="1" fill="#b3b287"/><rect x="123" y="30" width="1" height="1" fill="#9aa46a"/><rect x="199" y="18" width="1" height="1" fill="#b3b287"/><rect x="137" y="23" width="1" height="1" fill="#a9ad7a"/><rect x="106" y="16" width="1" height="1" fill="#9aa46a"/><rect x="67" y="26" width="1" height="1" fill="#5e7038"/><rect x="111" y="39" width="1" height="1" fill="#b3b287"/><rect x="67" y="28" width="1" height="1" fill="#b3b287"/><rect x="96" y="19" width="1" height="1" fill="#b3b287"/><rect x="85" y="8" width="1" height="1" fill="#b3b287"/><rect x="185" y="11" width="1" height="1" fill="#5e7038"/><rect x="74" y="34" width="1" height="1" fill="#9aa46a"/><rect x="105" y="9" width="1" height="1" fill="#b3b287"/><rect x="94" y="8" width="1" height="1" fill="#5e7038"/><rect x="149" y="40" width="1" height="1" fill="#9aa46a"/><rect x="124" y="36" width="1" height="1" fill="#9aa46a"/><rect x="70" y="31" width="1" height="1" fill="#9aa46a"/><rect x="192" y="19" width="1" height="1" fill="#9aa46a"/><rect x="203" y="13" width="1" height="1" fill="#9aa46a"/><rect x="188" y="14" width="1" height="1" fill="#a9ad7a"/><rect x="180" y="15" width="1" height="1" fill="#9aa46a"/><rect x="122" y="22" width="1" height="1" fill="#b3b287"/><rect x="128" y="27" width="1" height="1" fill="#b3b287"/><rect x="121" y="17" width="1" height="1" fill="#5e7038"/><rect x="200" y="37" width="1" height="1" fill="#5e7038"/><rect x="127" y="32" width="1" height="1" fill="#b3b287"/><rect x="140" y="37" width="1" height="1" fill="#a9ad7a"/><rect x="188" y="41" width="1" height="1" fill="#a9ad7a"/><rect x="194" y="29" width="1" height="1" fill="#9aa46a"/><rect x="193" y="38" width="1" height="1" fill="#a9ad7a"/><rect x="84" y="13" width="1" height="1" fill="#a9ad7a"/><rect x="137" y="17" width="1" height="1" fill="#a9ad7a"/><rect x="110" y="11" width="1" height="1" fill="#5e7038"/><rect x="94" y="11" width="1" height="1" fill="#9aa46a"/><rect x="153" y="36" width="1" height="1" fill="#a9ad7a"/><rect x="172" y="10" width="1" height="1" fill="#5e7038"/><rect x="66" y="14" width="1" height="1" fill="#a9ad7a"/><rect x="187" y="33" width="1" height="1" fill="#a9ad7a"/><rect x="205" y="36" width="1" height="1" fill="#a9ad7a"/><rect x="136" y="21" width="1" height="1" fill="#9aa46a"/><rect x="106" y="15" width="1" height="1" fill="#5e7038"/><rect x="147" y="15" width="1" height="1" fill="#9aa46a"/><rect x="167" y="33" width="1" height="1" fill="#9aa46a"/><rect x="64" y="19" width="1" height="1" fill="#5e7038"/><rect x="153" y="32" width="1" height="1" fill="#b3b287"/><rect x="121" y="29" width="1" height="1" fill="#5e7038"/><rect x="61" y="9" width="1" height="1" fill="#b3b287"/><rect x="122" y="18" width="1" height="1" fill="#a9ad7a"/><rect x="199" y="16" width="1" height="1" fill="#b3b287"/><rect x="76" y="29" width="1" height="1" fill="#5e7038"/><rect x="159" y="31" width="1" height="1" fill="#a9ad7a"/><rect x="181" y="30" width="1" height="1" fill="#5e7038"/><rect x="80" y="33" width="1" height="1" fill="#a9ad7a"/><rect x="138" y="24" width="1" height="1" fill="#5e7038"/><rect x="185" y="28" width="1" height="1" fill="#b3b287"/><rect x="145" y="34" width="1" height="1" fill="#a9ad7a"/><rect x="138" y="10" width="1" height="1" fill="#a9ad7a"/><rect x="107" y="24" width="1" height="1" fill="#a9ad7a"/><rect x="95" y="8" width="1" height="1" fill="#9aa46a"/><rect x="127" y="29" width="1" height="1" fill="#5e7038"/><rect x="96" y="25" width="1" height="1" fill="#b3b287"/><rect x="142" y="41" width="1" height="1" fill="#5e7038"/><rect x="134" y="41" width="1" height="1" fill="#5e7038"/><rect x="185" y="41" width="1" height="1" fill="#5e7038"/><rect x="162" y="32" width="1" height="1" fill="#5e7038"/><rect x="82" y="17" width="1" height="1" fill="#9aa46a"/><rect x="83" y="21" width="1" height="1" fill="#5e7038"/><rect x="196" y="22" width="1" height="1" fill="#5e7038"/><rect x="147" y="36" width="1" height="1" fill="#9aa46a"/><rect x="98" y="8" width="1" height="1" fill="#b3b287"/><rect x="199" y="36" width="1" height="1" fill="#b3b287"/><rect x="159" y="36" width="1" height="1" fill="#b3b287"/><rect x="192" y="13" width="1" height="1" fill="#b3b287"/><rect x="130" y="16" width="1" height="1" fill="#9aa46a"/><rect x="144" y="10" width="1" height="1" fill="#5e7038"/><rect x="175" y="6" width="1" height="1" fill="#5e7038"/><rect x="164" y="9" width="1" height="1" fill="#a9ad7a"/><rect x="131" y="30" width="1" height="1" fill="#5e7038"/><rect x="176" y="37" width="1" height="1" fill="#a9ad7a"/><rect x="129" y="10" width="1" height="1" fill="#9aa46a"/><rect x="156" y="33" width="1" height="1" fill="#a9ad7a"/><rect x="203" y="36" width="1" height="1" fill="#9aa46a"/><rect x="192" y="33" width="1" height="1" fill="#9aa46a"/><rect x="86" y="30" width="1" height="1" fill="#a9ad7a"/><rect x="194" y="11" width="1" height="1" fill="#a9ad7a"/><rect x="105" y="18" width="1" height="1" fill="#a9ad7a"/><rect x="76" y="11" width="1" height="1" fill="#b3b287"/><rect x="63" y="19" width="1" height="1" fill="#b3b287"/><rect x="124" y="20" width="1" height="1" fill="#9aa46a"/><rect x="155" y="31" width="1" height="1" fill="#5e7038"/><rect x="117" y="23" width="1" height="1" fill="#a9ad7a"/><rect x="123" y="18" width="1" height="1" fill="#b3b287"/><rect x="73" y="40" width="1" height="1" fill="#b3b287"/><rect x="160" y="15" width="1" height="1" fill="#5e7038"/><rect x="103" y="28" width="1" height="1" fill="#b3b287"/><rect x="74" y="40" width="1" height="1" fill="#b3b287"/><rect x="160" y="23" width="1" height="1" fill="#a9ad7a"/><rect x="159" y="21" width="1" height="1" fill="#a9ad7a"/><rect x="166" y="28" width="1" height="1" fill="#9aa46a"/><rect x="156" y="31" width="1" height="1" fill="#9aa46a"/><rect x="85" y="37" width="1" height="1" fill="#5e7038"/><rect x="77" y="39" width="1" height="1" fill="#9aa46a"/><rect x="197" y="27" width="1" height="1" fill="#5e7038"/><rect x="142" y="27" width="1" height="1" fill="#5e7038"/><rect x="131" y="33" width="1" height="1" fill="#a9ad7a"/><rect x="74" y="8" width="1" height="1" fill="#5e7038"/><rect x="112" y="11" width="1" height="1" fill="#5e7038"/><rect x="130" y="11" width="1" height="1" fill="#b3b287"/><rect x="190" y="40" width="1" height="1" fill="#5e7038"/><rect x="140" y="32" width="1" height="1" fill="#b3b287"/><rect x="81" y="25" width="1" height="1" fill="#a9ad7a"/><rect x="143" y="38" width="1" height="1" fill="#a9ad7a"/><rect x="86" y="8" width="1" height="1" fill="#5e7038"/><rect x="159" y="16" width="1" height="1" fill="#9aa46a"/><rect x="147" y="6" width="1" height="1" fill="#5e7038"/><rect x="179" y="23" width="1" height="1" fill="#9aa46a"/><rect x="144" y="8" width="1" height="1" fill="#b3b287"/><rect x="114" y="12" width="1" height="1" fill="#5e7038"/><rect x="193" y="40" width="1" height="1" fill="#5e7038"/><rect x="106" y="38" width="1" height="1" fill="#b3b287"/><rect x="162" y="13" width="1" height="1" fill="#5e7038"/><rect x="63" y="8" width="1" height="1" fill="#a9ad7a"/><rect x="74" y="32" width="1" height="1" fill="#9aa46a"/><rect x="132" y="22" width="1" height="1" fill="#5e7038"/><rect x="88" y="33" width="1" height="1" fill="#9aa46a"/><rect x="64" y="21" width="1" height="1" fill="#5e7038"/><rect x="75" y="12" width="1" height="1" fill="#9aa46a"/><rect x="78" y="33" width="1" height="1" fill="#a9ad7a"/><rect x="62" y="26" width="1" height="1" fill="#a9ad7a"/><rect x="109" y="14" width="1" height="1" fill="#b3b287"/><rect x="188" y="25" width="1" height="1" fill="#a9ad7a"/><rect x="166" y="31" width="1" height="1" fill="#b3b287"/><rect x="68" y="8" width="1" height="1" fill="#9aa46a"/><rect x="88" y="7" width="1" height="1" fill="#5e7038"/><rect x="187" y="9" width="1" height="1" fill="#5e7038"/><rect x="104" y="20" width="1" height="1" fill="#5e7038"/><rect x="124" y="19" width="1" height="1" fill="#a9ad7a"/><rect x="167" y="15" width="1" height="1" fill="#b3b287"/><rect x="126" y="15" width="1" height="1" fill="#5e7038"/><rect x="90" y="33" width="1" height="1" fill="#9aa46a"/><rect x="187" y="22" width="1" height="1" fill="#9aa46a"/><rect x="90" y="7" width="1" height="1" fill="#5e7038"/><rect x="134" y="27" width="1" height="1" fill="#9aa46a"/><rect x="75" y="7" width="1" height="1" fill="#5e7038"/><rect x="86" y="35" width="1" height="1" fill="#5e7038"/><rect x="126" y="17" width="1" height="1" fill="#a9ad7a"/><rect x="132" y="38" width="1" height="1" fill="#9aa46a"/><rect x="94" y="16" width="1" height="1" fill="#9aa46a"/><rect x="83" y="26" width="1" height="1" fill="#b3b287"/><rect x="196" y="25" width="1" height="1" fill="#b3b287"/><rect x="100" y="33" width="1" height="1" fill="#5e7038"/><rect x="177" y="40" width="1" height="1" fill="#5e7038"/><rect x="96" y="11" width="1" height="1" fill="#b3b287"/><rect x="153" y="14" width="1" height="1" fill="#a9ad7a"/><rect x="67" y="18" width="1" height="1" fill="#a9ad7a"/><rect x="66" y="27" width="1" height="1" fill="#b3b287"/><rect x="88" y="41" width="1" height="1" fill="#5e7038"/><rect x="109" y="20" width="1" height="1" fill="#b3b287"/><rect x="104" y="25" width="1" height="1" fill="#5e7038"/><rect x="71" y="12" width="1" height="1" fill="#5e7038"/><rect x="75" y="16" width="1" height="1" fill="#b3b287"/><rect x="139" y="33" width="1" height="1" fill="#5e7038"/><rect x="84" y="31" width="1" height="1" fill="#5e7038"/><rect x="184" y="23" width="1" height="1" fill="#9aa46a"/><rect x="113" y="17" width="1" height="1" fill="#9aa46a"/><rect x="125" y="30" width="1" height="1" fill="#b3b287"/><rect x="99" y="7" width="1" height="1" fill="#5e7038"/><rect x="84" y="32" width="1" height="1" fill="#5e7038"/><rect x="72" y="29" width="1" height="1" fill="#a9ad7a"/><rect x="106" y="25" width="1" height="1" fill="#a9ad7a"/><rect x="191" y="37" width="1" height="1" fill="#5e7038"/><rect x="128" y="36" width="1" height="1" fill="#b3b287"/><rect x="87" y="33" width="1" height="1" fill="#a9ad7a"/><rect x="109" y="13" width="1" height="1" fill="#5e7038"/><rect x="70" y="27" width="1" height="1" fill="#9aa46a"/><rect x="199" y="6" width="1" height="1" fill="#a9ad7a"/><rect x="75" y="12" width="1" height="1" fill="#9aa46a"/><rect x="91" y="24" width="1" height="1" fill="#5e7038"/><rect x="134" y="38" width="1" height="1" fill="#b3b287"/><rect x="177" y="22" width="1" height="1" fill="#9aa46a"/><rect x="129" y="26" width="1" height="1" fill="#a9ad7a"/><rect x="62" y="41" width="1" height="1" fill="#9aa46a"/><rect x="200" y="11" width="1" height="1" fill="#a9ad7a"/><rect x="128" y="9" width="1" height="1" fill="#a9ad7a"/><rect x="155" y="32" width="1" height="1" fill="#b3b287"/><rect x="119" y="28" width="1" height="1" fill="#a9ad7a"/><rect x="102" y="40" width="1" height="1" fill="#5e7038"/><rect x="181" y="9" width="1" height="1" fill="#a9ad7a"/><rect x="128" y="31" width="1" height="1" fill="#a9ad7a"/><rect x="110" y="8" width="1" height="1" fill="#a9ad7a"/><rect x="198" y="29" width="1" height="1" fill="#b3b287"/><rect x="122" y="27" width="1" height="1" fill="#9aa46a"/><rect x="96" y="35" width="1" height="1" fill="#a9ad7a"/><rect x="109" y="18" width="1" height="1" fill="#a9ad7a"/><rect x="96" y="14" width="1" height="1" fill="#9aa46a"/><rect x="168" y="37" width="1" height="1" fill="#5e7038"/><rect x="199" y="23" width="1" height="1" fill="#5e7038"/><rect x="114" y="8" width="1" height="1" fill="#5e7038"/><rect x="131" y="32" width="1" height="1" fill="#5e7038"/><rect x="129" y="25" width="1" height="1" fill="#a9ad7a"/><rect x="102" y="39" width="1" height="1" fill="#9aa46a"/><rect x="81" y="21" width="1" height="1" fill="#a9ad7a"/><rect x="171" y="12" width="1" height="1" fill="#5e7038"/><rect x="64" y="20" width="1" height="1" fill="#9aa46a"/><rect x="171" y="12" width="1" height="1" fill="#a9ad7a"/><rect x="125" y="38" width="1" height="1" fill="#5e7038"/><rect x="70" y="6" width="1" height="1" fill="#b3b287"/><rect x="190" y="16" width="1" height="1" fill="#9aa46a"/><rect x="123" y="39" width="1" height="1" fill="#5e7038"/><rect x="137" y="23" width="1" height="1" fill="#b3b287"/><rect x="202" y="12" width="1" height="1" fill="#a9ad7a"/><rect x="128" y="37" width="1" height="1" fill="#b3b287"/><rect x="171" y="39" width="1" height="1" fill="#a9ad7a"/><rect x="60" y="26" width="1" height="1" fill="#9aa46a"/><rect x="139" y="7" width="1" height="1" fill="#a9ad7a"/><rect x="178" y="15" width="1" height="1" fill="#b3b287"/><rect x="123" y="14" width="1" height="1" fill="#a9ad7a"/><rect x="149" y="34" width="1" height="1" fill="#5e7038"/><rect x="105" y="10" width="1" height="1" fill="#5e7038"/><rect x="121" y="11" width="1" height="1" fill="#a9ad7a"/><rect x="173" y="24" width="1" height="1" fill="#9aa46a"/><rect x="170" y="35" width="1" height="1" fill="#5e7038"/><rect x="135" y="35" width="1" height="1" fill="#9aa46a"/><rect x="100" y="7" width="1" height="1" fill="#a9ad7a"/><rect x="181" y="19" width="1" height="1" fill="#5e7038"/><rect x="114" y="27" width="1" height="1" fill="#b3b287"/><rect x="86" y="29" width="1" height="1" fill="#a9ad7a"/><rect x="120" y="15" width="1" height="1" fill="#5e7038"/><rect x="100" y="11" width="1" height="1" fill="#b3b287"/><rect x="203" y="7" width="1" height="1" fill="#b3b287"/><rect x="131" y="10" width="1" height="1" fill="#5e7038"/><rect x="199" y="26" width="1" height="1" fill="#a9ad7a"/><rect x="106" y="25" width="1" height="1" fill="#a9ad7a"/><rect x="132" y="12" width="1" height="1" fill="#b3b287"/><rect x="73" y="28" width="1" height="1" fill="#b3b287"/><rect x="63" y="20" width="1" height="1" fill="#5e7038"/><rect x="87" y="39" width="1" height="1" fill="#9aa46a"/><rect x="157" y="40" width="1" height="1" fill="#5e7038"/><rect x="106" y="11" width="1" height="1" fill="#a9ad7a"/><rect x="201" y="13" width="1" height="1" fill="#5e7038"/><rect x="121" y="17" width="1" height="1" fill="#a9ad7a"/><rect x="133" y="40" width="1" height="1" fill="#a9ad7a"/><rect x="185" y="37" width="1" height="1" fill="#b3b287"/><rect x="205" y="29" width="1" height="1" fill="#5e7038"/><rect x="98" y="20" width="1" height="1" fill="#b3b287"/><rect x="102" y="24" width="1" height="1" fill="#9aa46a"/><rect x="94" y="40" width="1" height="1" fill="#9aa46a"/><rect x="81" y="30" width="1" height="1" fill="#5e7038"/><rect x="160" y="27" width="1" height="1" fill="#9aa46a"/><rect x="117" y="8" width="1" height="1" fill="#9aa46a"/><rect x="105" y="27" width="1" height="1" fill="#9aa46a"/><rect x="203" y="22" width="1" height="1" fill="#5e7038"/><rect x="176" y="18" width="1" height="1" fill="#9aa46a"/><rect x="78" y="6" width="1" height="1" fill="#9aa46a"/><rect x="116" y="39" width="1" height="1" fill="#a9ad7a"/><rect x="140" y="38" width="1" height="1" fill="#a9ad7a"/><rect x="164" y="13" width="1" height="1" fill="#a9ad7a"/><rect x="170" y="22" width="1" height="1" fill="#5e7038"/><rect x="144" y="19" width="1" height="1" fill="#b3b287"/><rect x="125" y="22" width="1" height="1" fill="#5e7038"/><rect x="88" y="25" width="1" height="1" fill="#9aa46a"/><rect x="103" y="36" width="1" height="1" fill="#9aa46a"/><rect x="106" y="35" width="1" height="1" fill="#9aa46a"/><rect x="120" y="37" width="1" height="1" fill="#a9ad7a"/><rect x="145" y="7" width="1" height="1" fill="#a9ad7a"/><rect x="162" y="22" width="1" height="1" fill="#b3b287"/><rect x="72" y="23" width="1" height="1" fill="#5e7038"/><rect x="107" y="25" width="1" height="1" fill="#9aa46a"/><rect x="107" y="21" width="1" height="1" fill="#b3b287"/><rect x="154" y="25" width="1" height="1" fill="#b3b287"/><rect x="188" y="35" width="1" height="1" fill="#b3b287"/><rect x="205" y="12" width="1" height="1" fill="#9aa46a"/><rect x="77" y="21" width="1" height="1" fill="#b3b287"/><rect x="168" y="10" width="1" height="1" fill="#5e7038"/><rect x="204" y="19" width="1" height="1" fill="#5e7038"/><rect x="109" y="33" width="1" height="1" fill="#9aa46a"/><rect x="207" y="22" width="1" height="1" fill="#5e7038"/><rect x="121" y="23" width="1" height="1" fill="#b3b287"/><rect x="67" y="36" width="1" height="1" fill="#5e7038"/><rect x="169" y="16" width="1" height="1" fill="#b3b287"/><rect x="114" y="18" width="1" height="1" fill="#a9ad7a"/><rect x="146" y="6" width="1" height="1" fill="#9aa46a"/><rect x="90" y="18" width="1" height="1" fill="#9aa46a"/><rect x="62" y="23" width="1" height="1" fill="#b3b287"/><rect x="139" y="31" width="1" height="1" fill="#9aa46a"/><rect x="125" y="29" width="1" height="1" fill="#a9ad7a"/><rect x="135" y="39" width="1" height="1" fill="#9aa46a"/><rect x="130" y="37" width="1" height="1" fill="#b3b287"/><rect x="84" y="37" width="1" height="1" fill="#5e7038"/><rect x="62" y="15" width="1" height="1" fill="#a9ad7a"/><rect x="89" y="27" width="1" height="1" fill="#b3b287"/><rect x="206" y="29" width="1" height="1" fill="#a9ad7a"/><rect x="68" y="37" width="1" height="1" fill="#b3b287"/><rect x="130" y="18" width="1" height="1" fill="#a9ad7a"/><rect x="183" y="14" width="1" height="1" fill="#5e7038"/><rect x="191" y="9" width="1" height="1" fill="#b3b287"/><rect x="88" y="16" width="1" height="1" fill="#a9ad7a"/><rect x="66" y="22" width="1" height="1" fill="#9aa46a"/><rect x="93" y="20" width="1" height="1" fill="#5e7038"/><rect x="158" y="22" width="1" height="1" fill="#9aa46a"/><rect x="145" y="14" width="1" height="1" fill="#9aa46a"/><rect x="146" y="15" width="1" height="1" fill="#b3b287"/><rect x="106" y="36" width="1" height="1" fill="#9aa46a"/><rect x="126" y="30" width="1" height="1" fill="#b3b287"/><rect x="153" y="21" width="1" height="1" fill="#9aa46a"/><rect x="127" y="39" width="1" height="1" fill="#5e7038"/><rect x="185" y="13" width="1" height="1" fill="#a9ad7a"/><rect x="107" y="10" width="1" height="1" fill="#a9ad7a"/><rect x="94" y="15" width="1" height="1" fill="#9aa46a"/><rect x="85" y="11" width="1" height="1" fill="#b3b287"/><rect x="66" y="41" width="1" height="1" fill="#a9ad7a"/><rect x="89" y="13" width="1" height="1" fill="#9aa46a"/><rect x="143" y="10" width="1" height="1" fill="#9aa46a"/><rect x="91" y="28" width="1" height="1" fill="#9aa46a"/><rect x="85" y="32" width="1" height="1" fill="#5e7038"/><rect x="148" y="18" width="1" height="1" fill="#9aa46a"/><rect x="153" y="19" width="1" height="1" fill="#a9ad7a"/><rect x="70" y="23" width="1" height="1" fill="#5e7038"/><rect x="132" y="24" width="1" height="1" fill="#b3b287"/><rect x="136" y="18" width="1" height="1" fill="#5e7038"/><rect x="92" y="34" width="1" height="1" fill="#5e7038"/><rect x="131" y="8" width="1" height="1" fill="#5e7038"/><rect x="282" y="27" width="1" height="1" fill="#b3b287"/><rect x="269" y="20" width="1" height="1" fill="#b3b287"/><rect x="290" y="20" width="1" height="1" fill="#5e7038"/><rect x="283" y="23" width="1" height="1" fill="#a9ad7a"/><rect x="303" y="36" width="1" height="1" fill="#b3b287"/><rect x="296" y="25" width="1" height="1" fill="#b3b287"/><rect x="294" y="37" width="1" height="1" fill="#b3b287"/><rect x="316" y="16" width="1" height="1" fill="#b3b287"/><rect x="287" y="14" width="1" height="1" fill="#9aa46a"/><rect x="277" y="26" width="1" height="1" fill="#5e7038"/><rect x="304" y="12" width="1" height="1" fill="#9aa46a"/><rect x="281" y="27" width="1" height="1" fill="#9aa46a"/><rect x="294" y="17" width="1" height="1" fill="#5e7038"/><rect x="295" y="14" width="1" height="1" fill="#a9ad7a"/><rect x="298" y="26" width="1" height="1" fill="#9aa46a"/><rect x="292" y="6" width="1" height="1" fill="#a9ad7a"/><rect x="294" y="4" width="1" height="1" fill="#5e7038"/><rect x="313" y="19" width="1" height="1" fill="#5e7038"/><rect x="279" y="18" width="1" height="1" fill="#b3b287"/><rect x="276" y="10" width="1" height="1" fill="#9aa46a"/><rect x="317" y="18" width="1" height="1" fill="#5e7038"/><rect x="271" y="14" width="1" height="1" fill="#9aa46a"/><rect x="278" y="29" width="1" height="1" fill="#9aa46a"/><rect x="301" y="9" width="1" height="1" fill="#b3b287"/><rect x="308" y="27" width="1" height="1" fill="#a9ad7a"/><rect x="269" y="26" width="1" height="1" fill="#a9ad7a"/><rect x="276" y="17" width="1" height="1" fill="#a9ad7a"/><rect x="282" y="28" width="1" height="1" fill="#9aa46a"/><rect x="265" y="18" width="1" height="1" fill="#9aa46a"/><rect x="284" y="32" width="1" height="1" fill="#5e7038"/><rect x="292" y="25" width="1" height="1" fill="#5e7038"/><rect x="319" y="16" width="1" height="1" fill="#b3b287"/><rect x="294" y="22" width="1" height="1" fill="#5e7038"/><rect x="308" y="5" width="1" height="1" fill="#9aa46a"/><rect x="311" y="27" width="1" height="1" fill="#b3b287"/><rect x="278" y="23" width="1" height="1" fill="#b3b287"/><rect x="275" y="6" width="1" height="1" fill="#a9ad7a"/><rect x="291" y="27" width="1" height="1" fill="#9aa46a"/><rect x="270" y="12" width="1" height="1" fill="#9aa46a"/><rect x="278" y="3" width="1" height="1" fill="#a9ad7a"/><rect x="313" y="5" width="1" height="1" fill="#a9ad7a"/><rect x="303" y="23" width="1" height="1" fill="#5e7038"/><rect x="303" y="20" width="1" height="1" fill="#5e7038"/><rect x="278" y="26" width="1" height="1" fill="#a9ad7a"/><rect x="267" y="25" width="1" height="1" fill="#5e7038"/><rect x="293" y="12" width="1" height="1" fill="#b3b287"/><rect x="269" y="30" width="1" height="1" fill="#5e7038"/><rect x="316" y="27" width="1" height="1" fill="#9aa46a"/><rect x="288" y="9" width="1" height="1" fill="#a9ad7a"/><rect x="283" y="9" width="1" height="1" fill="#5e7038"/><rect x="285" y="15" width="1" height="1" fill="#a9ad7a"/><rect x="294" y="22" width="1" height="1" fill="#b3b287"/><rect x="269" y="15" width="1" height="1" fill="#b3b287"/><rect x="276" y="17" width="1" height="1" fill="#b3b287"/><rect x="299" y="36" width="1" height="1" fill="#5e7038"/><rect x="301" y="27" width="1" height="1" fill="#5e7038"/><rect x="299" y="30" width="1" height="1" fill="#9aa46a"/><rect x="308" y="19" width="1" height="1" fill="#a9ad7a"/><rect x="279" y="35" width="1" height="1" fill="#9aa46a"/><rect x="288" y="5" width="1" height="1" fill="#9aa46a"/><rect x="276" y="19" width="1" height="1" fill="#b3b287"/><rect x="270" y="18" width="1" height="1" fill="#5e7038"/><rect x="309" y="27" width="1" height="1" fill="#5e7038"/><rect x="298" y="2" width="1" height="1" fill="#5e7038"/><rect x="301" y="11" width="1" height="1" fill="#5e7038"/><rect x="291" y="29" width="1" height="1" fill="#9aa46a"/><rect x="281" y="21" width="1" height="1" fill="#5e7038"/><rect x="318" y="7" width="1" height="1" fill="#a9ad7a"/><rect x="272" y="14" width="1" height="1" fill="#9aa46a"/><rect x="299" y="3" width="1" height="1" fill="#b3b287"/><rect x="292" y="36" width="1" height="1" fill="#a9ad7a"/><rect x="291" y="13" width="1" height="1" fill="#5e7038"/><rect x="316" y="16" width="1" height="1" fill="#b3b287"/><rect x="295" y="14" width="1" height="1" fill="#5e7038"/><rect x="283" y="35" width="1" height="1" fill="#b3b287"/><rect x="280" y="27" width="1" height="1" fill="#b3b287"/><rect x="308" y="28" width="1" height="1" fill="#9aa46a"/><rect x="283" y="24" width="1" height="1" fill="#5e7038"/><rect x="318" y="18" width="1" height="1" fill="#9aa46a"/><rect x="304" y="22" width="1" height="1" fill="#9aa46a"/><rect x="286" y="14" width="1" height="1" fill="#b3b287"/><rect x="269" y="7" width="1" height="1" fill="#5e7038"/><rect x="278" y="33" width="1" height="1" fill="#b3b287"/><rect x="284" y="30" width="1" height="1" fill="#b3b287"/><rect x="305" y="28" width="1" height="1" fill="#b3b287"/><rect x="315" y="14" width="1" height="1" fill="#9aa46a"/><rect x="271" y="33" width="1" height="1" fill="#a9ad7a"/><rect x="300" y="27" width="1" height="1" fill="#a9ad7a"/><rect x="297" y="15" width="1" height="1" fill="#5e7038"/><rect x="285" y="19" width="1" height="1" fill="#5e7038"/><rect x="298" y="18" width="1" height="1" fill="#a9ad7a"/><rect x="300" y="26" width="1" height="1" fill="#a9ad7a"/><rect x="274" y="33" width="1" height="1" fill="#a9ad7a"/><rect x="319" y="5" width="1" height="1" fill="#a9ad7a"/><rect x="270" y="22" width="1" height="1" fill="#b3b287"/><rect x="294" y="5" width="1" height="1" fill="#5e7038"/><rect x="288" y="5" width="1" height="1" fill="#9aa46a"/><rect x="302" y="23" width="1" height="1" fill="#5e7038"/><rect x="281" y="16" width="1" height="1" fill="#a9ad7a"/><rect x="317" y="12" width="1" height="1" fill="#5e7038"/><rect x="275" y="4" width="1" height="1" fill="#9aa46a"/><rect x="268" y="33" width="1" height="1" fill="#9aa46a"/><rect x="312" y="32" width="1" height="1" fill="#b3b287"/><rect x="276" y="33" width="1" height="1" fill="#b3b287"/><rect x="295" y="29" width="1" height="1" fill="#9aa46a"/><rect x="295" y="15" width="1" height="1" fill="#b3b287"/><rect x="310" y="9" width="1" height="1" fill="#9aa46a"/><rect x="306" y="30" width="1" height="1" fill="#a9ad7a"/><rect x="308" y="13" width="1" height="1" fill="#b3b287"/><rect x="272" y="36" width="1" height="1" fill="#9aa46a"/><rect x="315" y="21" width="1" height="1" fill="#a9ad7a"/><rect x="289" y="9" width="1" height="1" fill="#5e7038"/><rect x="278" y="11" width="1" height="1" fill="#9aa46a"/><rect x="289" y="8" width="1" height="1" fill="#b3b287"/><rect x="301" y="4" width="1" height="1" fill="#5e7038"/><rect x="304" y="29" width="1" height="1" fill="#9aa46a"/><rect x="277" y="5" width="1" height="1" fill="#a9ad7a"/><rect x="283" y="6" width="1" height="1" fill="#b3b287"/><rect x="266" y="29" width="1" height="1" fill="#a9ad7a"/><rect x="286" y="12" width="1" height="1" fill="#b3b287"/><rect x="4" y="163" width="1" height="1" fill="#5e7038"/><rect x="0" y="173" width="1" height="1" fill="#b3b287"/><rect x="158" y="164" width="1" height="1" fill="#5e7038"/><rect x="158" y="156" width="1" height="1" fill="#5e7038"/><rect x="70" y="161" width="1" height="1" fill="#b3b287"/><rect x="136" y="178" width="1" height="1" fill="#b3b287"/><rect x="89" y="165" width="1" height="1" fill="#5e7038"/><rect x="57" y="157" width="1" height="1" fill="#a9ad7a"/><rect x="123" y="155" width="1" height="1" fill="#b3b287"/><rect x="58" y="161" width="1" height="1" fill="#a9ad7a"/><rect x="156" y="175" width="1" height="1" fill="#a9ad7a"/><rect x="140" y="164" width="1" height="1" fill="#5e7038"/><rect x="148" y="180" width="1" height="1" fill="#5e7038"/><rect x="163" y="166" width="1" height="1" fill="#a9ad7a"/><rect x="20" y="173" width="1" height="1" fill="#a9ad7a"/><rect x="15" y="160" width="1" height="1" fill="#9aa46a"/><rect x="9" y="163" width="1" height="1" fill="#a9ad7a"/><rect x="95" y="178" width="1" height="1" fill="#9aa46a"/><rect x="61" y="163" width="1" height="1" fill="#b3b287"/><rect x="143" y="171" width="1" height="1" fill="#a9ad7a"/><rect x="160" y="171" width="1" height="1" fill="#a9ad7a"/><rect x="40" y="168" width="1" height="1" fill="#9aa46a"/><rect x="130" y="160" width="1" height="1" fill="#5e7038"/><rect x="136" y="174" width="1" height="1" fill="#b3b287"/><rect x="15" y="173" width="1" height="1" fill="#b3b287"/><rect x="81" y="162" width="1" height="1" fill="#b3b287"/><rect x="54" y="160" width="1" height="1" fill="#9aa46a"/><rect x="173" y="172" width="1" height="1" fill="#5e7038"/><rect x="75" y="179" width="1" height="1" fill="#5e7038"/><rect x="153" y="178" width="1" height="1" fill="#b3b287"/><rect x="1" y="172" width="1" height="1" fill="#5e7038"/><rect x="176" y="169" width="1" height="1" fill="#5e7038"/><rect x="99" y="175" width="1" height="1" fill="#b3b287"/><rect x="115" y="165" width="1" height="1" fill="#5e7038"/><rect x="145" y="172" width="1" height="1" fill="#b3b287"/><rect x="16" y="171" width="1" height="1" fill="#5e7038"/><rect x="146" y="162" width="1" height="1" fill="#9aa46a"/><rect x="38" y="158" width="1" height="1" fill="#9aa46a"/><rect x="178" y="177" width="1" height="1" fill="#b3b287"/><rect x="0" y="155" width="1" height="1" fill="#9aa46a"/><rect x="116" y="157" width="1" height="1" fill="#a9ad7a"/><rect x="54" y="170" width="1" height="1" fill="#a9ad7a"/><rect x="0" y="163" width="1" height="1" fill="#5e7038"/><rect x="111" y="177" width="1" height="1" fill="#b3b287"/><rect x="146" y="155" width="1" height="1" fill="#5e7038"/><rect x="109" y="165" width="1" height="1" fill="#5e7038"/><rect x="103" y="161" width="1" height="1" fill="#a9ad7a"/><rect x="17" y="176" width="1" height="1" fill="#9aa46a"/><rect x="89" y="165" width="1" height="1" fill="#a9ad7a"/><rect x="2" y="166" width="1" height="1" fill="#b3b287"/><rect x="26" y="159" width="1" height="1" fill="#9aa46a"/><rect x="65" y="174" width="1" height="1" fill="#b3b287"/><rect x="80" y="171" width="1" height="1" fill="#a9ad7a"/><rect x="86" y="162" width="1" height="1" fill="#a9ad7a"/><rect x="173" y="171" width="1" height="1" fill="#a9ad7a"/><rect x="181" y="158" width="1" height="1" fill="#b3b287"/><rect x="179" y="174" width="1" height="1" fill="#5e7038"/><rect x="138" y="162" width="1" height="1" fill="#5e7038"/><rect x="141" y="171" width="1" height="1" fill="#5e7038"/><rect x="8" y="158" width="1" height="1" fill="#b3b287"/><rect x="34" y="177" width="1" height="1" fill="#b3b287"/><rect x="164" y="172" width="1" height="1" fill="#9aa46a"/><rect x="129" y="161" width="1" height="1" fill="#9aa46a"/><rect x="139" y="174" width="1" height="1" fill="#b3b287"/><rect x="129" y="159" width="1" height="1" fill="#9aa46a"/><rect x="42" y="176" width="1" height="1" fill="#a9ad7a"/><rect x="162" y="179" width="1" height="1" fill="#5e7038"/><rect x="154" y="175" width="1" height="1" fill="#5e7038"/><rect x="141" y="162" width="1" height="1" fill="#9aa46a"/><rect x="162" y="170" width="1" height="1" fill="#b3b287"/><rect x="154" y="161" width="1" height="1" fill="#b3b287"/><rect x="156" y="171" width="1" height="1" fill="#5e7038"/><rect x="120" y="173" width="1" height="1" fill="#9aa46a"/><rect x="120" y="166" width="1" height="1" fill="#b3b287"/><rect x="183" y="160" width="1" height="1" fill="#b3b287"/><rect x="135" y="156" width="1" height="1" fill="#5e7038"/><rect x="121" y="156" width="1" height="1" fill="#9aa46a"/><rect x="97" y="161" width="1" height="1" fill="#b3b287"/><rect x="83" y="169" width="1" height="1" fill="#a9ad7a"/><rect x="106" y="178" width="1" height="1" fill="#5e7038"/><rect x="147" y="169" width="1" height="1" fill="#b3b287"/><rect x="58" y="161" width="1" height="1" fill="#9aa46a"/><rect x="48" y="178" width="1" height="1" fill="#5e7038"/><rect x="143" y="170" width="1" height="1" fill="#b3b287"/><rect x="160" y="173" width="1" height="1" fill="#5e7038"/><rect x="15" y="175" width="1" height="1" fill="#a9ad7a"/><rect x="184" y="170" width="1" height="1" fill="#a9ad7a"/><rect x="104" y="163" width="1" height="1" fill="#a9ad7a"/><rect x="116" y="159" width="1" height="1" fill="#b3b287"/><rect x="66" y="177" width="1" height="1" fill="#5e7038"/><rect x="159" y="164" width="1" height="1" fill="#9aa46a"/><rect x="13" y="158" width="1" height="1" fill="#a9ad7a"/><rect x="44" y="166" width="1" height="1" fill="#b3b287"/><rect x="141" y="175" width="1" height="1" fill="#b3b287"/><rect x="14" y="167" width="1" height="1" fill="#9aa46a"/><rect x="37" y="157" width="1" height="1" fill="#a9ad7a"/><rect x="37" y="155" width="1" height="1" fill="#a9ad7a"/><rect x="31" y="179" width="1" height="1" fill="#5e7038"/><rect x="60" y="161" width="1" height="1" fill="#5e7038"/><rect x="134" y="170" width="1" height="1" fill="#9aa46a"/><rect x="34" y="156" width="1" height="1" fill="#b3b287"/><rect x="13" y="165" width="1" height="1" fill="#9aa46a"/><rect x="26" y="157" width="1" height="1" fill="#5e7038"/><rect x="52" y="177" width="1" height="1" fill="#a9ad7a"/><rect x="164" y="157" width="1" height="1" fill="#b3b287"/><rect x="153" y="161" width="1" height="1" fill="#a9ad7a"/><rect x="115" y="163" width="1" height="1" fill="#9aa46a"/><rect x="163" y="176" width="1" height="1" fill="#9aa46a"/><rect x="103" y="176" width="1" height="1" fill="#9aa46a"/><rect x="104" y="163" width="1" height="1" fill="#a9ad7a"/><rect x="55" y="163" width="1" height="1" fill="#5e7038"/><rect x="44" y="162" width="1" height="1" fill="#9aa46a"/><rect x="42" y="177" width="1" height="1" fill="#b3b287"/><rect x="18" y="164" width="1" height="1" fill="#5e7038"/><rect x="5" y="162" width="1" height="1" fill="#9aa46a"/><rect x="101" y="176" width="1" height="1" fill="#9aa46a"/><rect x="17" y="178" width="1" height="1" fill="#a9ad7a"/><rect x="151" y="155" width="1" height="1" fill="#b3b287"/><rect x="152" y="175" width="1" height="1" fill="#b3b287"/><rect x="87" y="171" width="1" height="1" fill="#b3b287"/><rect x="14" y="177" width="1" height="1" fill="#b3b287"/><rect x="175" y="159" width="1" height="1" fill="#a9ad7a"/><rect x="160" y="171" width="1" height="1" fill="#5e7038"/><rect x="117" y="176" width="1" height="1" fill="#5e7038"/><rect x="133" y="162" width="1" height="1" fill="#b3b287"/><rect x="64" y="175" width="1" height="1" fill="#b3b287"/><rect x="38" y="172" width="1" height="1" fill="#b3b287"/><rect x="146" y="159" width="1" height="1" fill="#5e7038"/><rect x="29" y="158" width="1" height="1" fill="#9aa46a"/><rect x="91" y="165" width="1" height="1" fill="#a9ad7a"/><rect x="72" y="179" width="1" height="1" fill="#b3b287"/><rect x="127" y="156" width="1" height="1" fill="#5e7038"/><rect x="86" y="170" width="1" height="1" fill="#b3b287"/><rect x="148" y="174" width="1" height="1" fill="#9aa46a"/><rect x="28" y="171" width="1" height="1" fill="#a9ad7a"/><rect x="45" y="165" width="1" height="1" fill="#5e7038"/><rect x="69" y="171" width="1" height="1" fill="#5e7038"/><rect x="138" y="165" width="1" height="1" fill="#b3b287"/><rect x="183" y="166" width="1" height="1" fill="#b3b287"/><rect x="15" y="175" width="1" height="1" fill="#b3b287"/><rect x="180" y="168" width="1" height="1" fill="#b3b287"/><rect x="132" y="159" width="1" height="1" fill="#9aa46a"/><rect x="84" y="167" width="1" height="1" fill="#5e7038"/><rect x="71" y="165" width="1" height="1" fill="#5e7038"/><rect x="55" y="172" width="1" height="1" fill="#b3b287"/><rect x="126" y="159" width="1" height="1" fill="#9aa46a"/><rect x="110" y="156" width="1" height="1" fill="#a9ad7a"/><rect x="8" y="162" width="1" height="1" fill="#5e7038"/><rect x="114" y="161" width="1" height="1" fill="#5e7038"/><rect x="1" y="179" width="1" height="1" fill="#5e7038"/><rect x="84" y="157" width="1" height="1" fill="#9aa46a"/><rect x="106" y="177" width="1" height="1" fill="#b3b287"/><rect x="116" y="159" width="1" height="1" fill="#a9ad7a"/><rect x="121" y="168" width="1" height="1" fill="#5e7038"/><rect x="70" y="171" width="1" height="1" fill="#a9ad7a"/><rect x="164" y="178" width="1" height="1" fill="#a9ad7a"/><rect x="15" y="175" width="1" height="1" fill="#5e7038"/><rect x="13" y="169" width="1" height="1" fill="#a9ad7a"/><rect x="84" y="179" width="1" height="1" fill="#9aa46a"/><rect x="124" y="157" width="1" height="1" fill="#5e7038"/><rect x="160" y="157" width="1" height="1" fill="#b3b287"/><rect x="58" y="174" width="1" height="1" fill="#a9ad7a"/><rect x="77" y="178" width="1" height="1" fill="#b3b287"/><rect x="21" y="170" width="1" height="1" fill="#9aa46a"/><rect x="71" y="175" width="1" height="1" fill="#b3b287"/><rect x="32" y="178" width="1" height="1" fill="#b3b287"/><rect x="69" y="160" width="1" height="1" fill="#a9ad7a"/><rect x="169" y="155" width="1" height="1" fill="#a9ad7a"/><rect x="64" y="155" width="1" height="1" fill="#9aa46a"/><rect x="17" y="179" width="1" height="1" fill="#5e7038"/><rect x="103" y="169" width="1" height="1" fill="#b3b287"/><rect x="93" y="162" width="1" height="1" fill="#9aa46a"/><rect x="162" y="157" width="1" height="1" fill="#b3b287"/><rect x="170" y="156" width="1" height="1" fill="#9aa46a"/><rect x="181" y="172" width="1" height="1" fill="#a9ad7a"/><rect x="131" y="176" width="1" height="1" fill="#9aa46a"/><rect x="64" y="180" width="1" height="1" fill="#9aa46a"/><rect x="14" y="176" width="1" height="1" fill="#5e7038"/><rect x="134" y="157" width="1" height="1" fill="#b3b287"/><rect x="84" y="177" width="1" height="1" fill="#b3b287"/><rect x="100" y="160" width="1" height="1" fill="#5e7038"/><rect x="106" y="177" width="1" height="1" fill="#a9ad7a"/><rect x="160" y="171" width="1" height="1" fill="#9aa46a"/><rect x="130" y="158" width="1" height="1" fill="#5e7038"/><rect x="42" y="163" width="1" height="1" fill="#9aa46a"/><rect x="129" y="179" width="1" height="1" fill="#a9ad7a"/><rect x="93" y="155" width="1" height="1" fill="#9aa46a"/><rect x="44" y="161" width="1" height="1" fill="#b3b287"/><rect x="33" y="163" width="1" height="1" fill="#9aa46a"/><rect x="184" y="159" width="1" height="1" fill="#b3b287"/><rect x="111" y="165" width="1" height="1" fill="#b3b287"/><rect x="163" y="163" width="1" height="1" fill="#a9ad7a"/><rect x="147" y="157" width="1" height="1" fill="#a9ad7a"/><rect x="48" y="180" width="1" height="1" fill="#a9ad7a"/><rect x="157" y="165" width="1" height="1" fill="#5e7038"/><rect x="82" y="176" width="1" height="1" fill="#b3b287"/><rect x="39" y="162" width="1" height="1" fill="#a9ad7a"/><rect x="79" y="174" width="1" height="1" fill="#9aa46a"/><rect x="94" y="157" width="1" height="1" fill="#b3b287"/><rect x="116" y="171" width="1" height="1" fill="#a9ad7a"/><rect x="155" y="167" width="1" height="1" fill="#b3b287"/><rect x="122" y="158" width="1" height="1" fill="#b3b287"/><rect x="3" y="172" width="1" height="1" fill="#9aa46a"/><rect x="24" y="156" width="1" height="1" fill="#a9ad7a"/><rect x="77" y="163" width="1" height="1" fill="#5e7038"/><rect x="45" y="160" width="1" height="1" fill="#b3b287"/><rect x="109" y="167" width="1" height="1" fill="#5e7038"/><rect x="112" y="169" width="1" height="1" fill="#a9ad7a"/><rect x="139" y="165" width="1" height="1" fill="#b3b287"/><rect x="31" y="160" width="1" height="1" fill="#a9ad7a"/><rect x="81" y="163" width="1" height="1" fill="#b3b287"/><rect x="83" y="159" width="1" height="1" fill="#5e7038"/><rect x="16" y="158" width="1" height="1" fill="#a9ad7a"/><rect x="67" y="158" width="1" height="1" fill="#9aa46a"/><rect x="175" y="170" width="1" height="1" fill="#9aa46a"/><rect x="163" y="164" width="1" height="1" fill="#b3b287"/><rect x="103" y="168" width="1" height="1" fill="#b3b287"/><rect x="123" y="175" width="1" height="1" fill="#5e7038"/><rect x="130" y="161" width="1" height="1" fill="#b3b287"/><rect x="85" y="169" width="1" height="1" fill="#a9ad7a"/><rect x="156" y="163" width="1" height="1" fill="#a9ad7a"/><rect x="34" y="157" width="1" height="1" fill="#b3b287"/><rect x="65" y="156" width="1" height="1" fill="#b3b287"/><rect x="93" y="173" width="1" height="1" fill="#b3b287"/><rect x="65" y="160" width="1" height="1" fill="#9aa46a"/><rect x="84" y="159" width="1" height="1" fill="#b3b287"/><rect x="154" y="163" width="1" height="1" fill="#a9ad7a"/><rect x="24" y="171" width="1" height="1" fill="#b3b287"/><rect x="153" y="155" width="1" height="1" fill="#9aa46a"/><rect x="169" y="174" width="1" height="1" fill="#9aa46a"/><rect x="103" y="170" width="1" height="1" fill="#5e7038"/><rect x="57" y="156" width="1" height="1" fill="#b3b287"/><rect x="110" y="161" width="1" height="1" fill="#b3b287"/><rect x="128" y="166" width="1" height="1" fill="#9aa46a"/><rect x="70" y="161" width="1" height="1" fill="#b3b287"/><rect x="168" y="169" width="1" height="1" fill="#b3b287"/><rect x="136" y="163" width="1" height="1" fill="#b3b287"/><rect x="86" y="171" width="1" height="1" fill="#a9ad7a"/><rect x="125" y="164" width="1" height="1" fill="#5e7038"/><rect x="66" y="178" width="1" height="1" fill="#b3b287"/><rect x="6" y="158" width="1" height="1" fill="#a9ad7a"/><rect x="53" y="164" width="1" height="1" fill="#5e7038"/><rect x="109" y="172" width="1" height="1" fill="#b3b287"/><rect x="1" y="175" width="1" height="1" fill="#9aa46a"/><rect x="58" y="169" width="1" height="1" fill="#b3b287"/><rect x="171" y="167" width="1" height="1" fill="#9aa46a"/><rect x="112" y="160" width="1" height="1" fill="#b3b287"/><rect x="145" y="156" width="1" height="1" fill="#5e7038"/><rect x="175" y="157" width="1" height="1" fill="#9aa46a"/><rect x="94" y="174" width="1" height="1" fill="#9aa46a"/><rect x="24" y="173" width="1" height="1" fill="#b3b287"/><rect x="136" y="164" width="1" height="1" fill="#9aa46a"/><rect x="95" y="164" width="1" height="1" fill="#a9ad7a"/><rect x="78" y="161" width="1" height="1" fill="#5e7038"/><rect x="17" y="158" width="1" height="1" fill="#9aa46a"/><rect x="138" y="177" width="1" height="1" fill="#5e7038"/><rect x="25" y="162" width="1" height="1" fill="#a9ad7a"/><rect x="153" y="171" width="1" height="1" fill="#5e7038"/><rect x="170" y="163" width="1" height="1" fill="#a9ad7a"/><rect x="113" y="169" width="1" height="1" fill="#b3b287"/><rect x="51" y="157" width="1" height="1" fill="#a9ad7a"/><rect x="104" y="176" width="1" height="1" fill="#a9ad7a"/><rect x="88" y="167" width="1" height="1" fill="#5e7038"/><rect x="173" y="169" width="1" height="1" fill="#a9ad7a"/><rect x="168" y="160" width="1" height="1" fill="#b3b287"/><rect x="75" y="172" width="1" height="1" fill="#b3b287"/><rect x="68" y="168" width="1" height="1" fill="#5e7038"/><rect x="21" y="165" width="1" height="1" fill="#9aa46a"/><rect x="69" y="168" width="1" height="1" fill="#b3b287"/><rect x="149" y="159" width="1" height="1" fill="#9aa46a"/><rect x="16" y="173" width="1" height="1" fill="#5e7038"/><rect x="111" y="180" width="1" height="1" fill="#9aa46a"/><rect x="103" y="165" width="1" height="1" fill="#5e7038"/><rect x="121" y="161" width="1" height="1" fill="#9aa46a"/><rect x="136" y="176" width="1" height="1" fill="#5e7038"/><rect x="14" y="179" width="1" height="1" fill="#5e7038"/><rect x="70" y="173" width="1" height="1" fill="#5e7038"/><rect x="88" y="173" width="1" height="1" fill="#b3b287"/><rect x="135" y="173" width="1" height="1" fill="#a9ad7a"/><rect x="145" y="160" width="1" height="1" fill="#a9ad7a"/><rect x="39" y="172" width="1" height="1" fill="#9aa46a"/><rect x="50" y="160" width="1" height="1" fill="#b3b287"/><rect x="65" y="176" width="1" height="1" fill="#5e7038"/><rect x="123" y="177" width="1" height="1" fill="#5e7038"/><rect x="179" y="161" width="1" height="1" fill="#b3b287"/><rect x="140" y="166" width="1" height="1" fill="#5e7038"/><rect x="130" y="177" width="1" height="1" fill="#a9ad7a"/><rect x="14" y="166" width="1" height="1" fill="#a9ad7a"/><rect x="18" y="179" width="1" height="1" fill="#b3b287"/><rect x="91" y="158" width="1" height="1" fill="#b3b287"/><rect x="151" y="167" width="1" height="1" fill="#a9ad7a"/><rect x="182" y="174" width="1" height="1" fill="#5e7038"/><rect x="101" y="173" width="1" height="1" fill="#b3b287"/><rect x="133" y="165" width="1" height="1" fill="#a9ad7a"/><rect x="2" y="156" width="1" height="1" fill="#5e7038"/><rect x="68" y="169" width="1" height="1" fill="#5e7038"/><rect x="98" y="171" width="1" height="1" fill="#9aa46a"/><rect x="168" y="158" width="1" height="1" fill="#5e7038"/><rect x="13" y="155" width="1" height="1" fill="#b3b287"/><rect x="42" y="174" width="1" height="1" fill="#5e7038"/><rect x="128" y="174" width="1" height="1" fill="#a9ad7a"/><rect x="114" y="176" width="1" height="1" fill="#a9ad7a"/><rect x="14" y="168" width="1" height="1" fill="#b3b287"/><rect x="40" y="179" width="1" height="1" fill="#a9ad7a"/><rect x="147" y="164" width="1" height="1" fill="#a9ad7a"/><rect x="40" y="168" width="1" height="1" fill="#5e7038"/><rect x="13" y="169" width="1" height="1" fill="#a9ad7a"/><rect x="6" y="163" width="1" height="1" fill="#b3b287"/><rect x="175" y="161" width="1" height="1" fill="#5e7038"/><rect x="125" y="164" width="1" height="1" fill="#b3b287"/><rect x="151" y="176" width="1" height="1" fill="#b3b287"/><rect x="185" y="171" width="1" height="1" fill="#a9ad7a"/><rect x="74" y="167" width="1" height="1" fill="#a9ad7a"/><rect x="159" y="161" width="1" height="1" fill="#9aa46a"/><rect x="4" y="174" width="1" height="1" fill="#9aa46a"/><rect x="34" y="177" width="1" height="1" fill="#b3b287"/><rect x="90" y="180" width="1" height="1" fill="#b3b287"/><rect x="23" y="169" width="1" height="1" fill="#9aa46a"/><rect x="178" y="159" width="1" height="1" fill="#9aa46a"/><rect x="55" y="176" width="1" height="1" fill="#9aa46a"/><rect x="139" y="158" width="1" height="1" fill="#a9ad7a"/><rect x="84" y="161" width="1" height="1" fill="#b3b287"/><rect x="183" y="179" width="1" height="1" fill="#9aa46a"/><rect x="42" y="172" width="1" height="1" fill="#a9ad7a"/><rect x="38" y="177" width="1" height="1" fill="#5e7038"/><rect x="172" y="156" width="1" height="1" fill="#9aa46a"/><rect x="185" y="171" width="1" height="1" fill="#9aa46a"/><rect x="58" y="155" width="1" height="1" fill="#b3b287"/><rect x="179" y="164" width="1" height="1" fill="#a9ad7a"/><rect x="183" y="156" width="1" height="1" fill="#b3b287"/><rect x="106" y="160" width="1" height="1" fill="#b3b287"/><rect x="124" y="162" width="1" height="1" fill="#a9ad7a"/><rect x="33" y="169" width="1" height="1" fill="#9aa46a"/><rect x="175" y="155" width="1" height="1" fill="#9aa46a"/><rect x="109" y="162" width="1" height="1" fill="#a9ad7a"/><rect x="52" y="173" width="1" height="1" fill="#5e7038"/><rect x="111" y="168" width="1" height="1" fill="#a9ad7a"/><rect x="128" y="158" width="1" height="1" fill="#5e7038"/><rect x="86" y="177" width="1" height="1" fill="#b3b287"/><rect x="158" y="155" width="1" height="1" fill="#9aa46a"/><rect x="112" y="156" width="1" height="1" fill="#a9ad7a"/><rect x="94" y="166" width="1" height="1" fill="#b3b287"/><rect x="129" y="176" width="1" height="1" fill="#9aa46a"/><rect x="43" y="177" width="1" height="1" fill="#5e7038"/><rect x="173" y="156" width="1" height="1" fill="#9aa46a"/><rect x="42" y="158" width="1" height="1" fill="#b3b287"/><rect x="37" y="171" width="1" height="1" fill="#b3b287"/><rect x="96" y="166" width="1" height="1" fill="#5e7038"/><rect x="70" y="170" width="1" height="1" fill="#9aa46a"/><rect x="135" y="162" width="1" height="1" fill="#9aa46a"/><rect x="306" y="89" width="1" height="1" fill="#9aa46a"/><rect x="306" y="87" width="1" height="1" fill="#a9ad7a"/><rect x="303" y="85" width="1" height="1" fill="#b3b287"/><rect x="302" y="66" width="1" height="1" fill="#a9ad7a"/><rect x="312" y="70" width="1" height="1" fill="#9aa46a"/><rect x="318" y="87" width="1" height="1" fill="#b3b287"/><rect x="306" y="91" width="1" height="1" fill="#b3b287"/><rect x="309" y="88" width="1" height="1" fill="#9aa46a"/><rect x="312" y="68" width="1" height="1" fill="#9aa46a"/><rect x="319" y="73" width="1" height="1" fill="#b3b287"/><rect x="318" y="92" width="1" height="1" fill="#5e7038"/><rect x="312" y="74" width="1" height="1" fill="#b3b287"/><rect x="306" y="64" width="1" height="1" fill="#5e7038"/><rect x="317" y="74" width="1" height="1" fill="#a9ad7a"/><rect x="314" y="89" width="1" height="1" fill="#a9ad7a"/><rect x="304" y="63" width="1" height="1" fill="#9aa46a"/><rect x="305" y="65" width="1" height="1" fill="#b3b287"/><rect x="316" y="73" width="1" height="1" fill="#b3b287"/><rect x="314" y="95" width="1" height="1" fill="#b3b287"/><rect x="315" y="78" width="1" height="1" fill="#5e7038"/><rect x="316" y="84" width="1" height="1" fill="#b3b287"/><rect x="314" y="61" width="1" height="1" fill="#9aa46a"/><rect x="319" y="91" width="1" height="1" fill="#9aa46a"/><rect x="311" y="86" width="1" height="1" fill="#5e7038"/><rect x="316" y="70" width="1" height="1" fill="#9aa46a"/><rect x="301" y="89" width="1" height="1" fill="#b3b287"/><rect x="314" y="68" width="1" height="1" fill="#9aa46a"/><rect x="315" y="81" width="1" height="1" fill="#a9ad7a"/><rect x="318" y="85" width="1" height="1" fill="#5e7038"/><rect x="310" y="79" width="1" height="1" fill="#b3b287"/><rect x="310" y="63" width="1" height="1" fill="#5e7038"/><rect x="310" y="83" width="1" height="1" fill="#b3b287"/><rect x="304" y="69" width="1" height="1" fill="#b3b287"/><rect x="313" y="67" width="1" height="1" fill="#9aa46a"/><rect x="309" y="77" width="1" height="1" fill="#9aa46a"/><rect x="306" y="88" width="1" height="1" fill="#5e7038"/><rect x="315" y="77" width="1" height="1" fill="#9aa46a"/><rect x="313" y="82" width="1" height="1" fill="#a9ad7a"/><rect x="305" y="61" width="1" height="1" fill="#9aa46a"/><rect x="303" y="70" width="1" height="1" fill="#9aa46a"/><rect x="306" y="83" width="1" height="1" fill="#9aa46a"/><rect x="301" y="82" width="1" height="1" fill="#a9ad7a"/><rect x="319" y="61" width="1" height="1" fill="#9aa46a"/><rect x="301" y="67" width="1" height="1" fill="#5e7038"/><rect x="301" y="61" width="1" height="1" fill="#b3b287"/><rect x="313" y="74" width="1" height="1" fill="#b3b287"/><rect x="308" y="85" width="1" height="1" fill="#a9ad7a"/><rect x="317" y="68" width="1" height="1" fill="#5e7038"/><rect x="313" y="93" width="1" height="1" fill="#5e7038"/><rect x="312" y="60" width="1" height="1" fill="#a9ad7a"/><rect x="302" y="68" width="1" height="1" fill="#9aa46a"/><rect x="308" y="84" width="1" height="1" fill="#5e7038"/><rect x="310" y="91" width="1" height="1" fill="#a9ad7a"/><rect x="307" y="75" width="1" height="1" fill="#5e7038"/><rect x="309" y="85" width="1" height="1" fill="#5e7038"/><rect x="305" y="88" width="1" height="1" fill="#b3b287"/><rect x="311" y="75" width="1" height="1" fill="#9aa46a"/><rect x="315" y="83" width="1" height="1" fill="#5e7038"/><rect x="309" y="79" width="1" height="1" fill="#a9ad7a"/><rect x="310" y="84" width="1" height="1" fill="#9aa46a"/><rect x="300" y="173" width="1" height="1" fill="#9aa46a"/><rect x="315" y="175" width="1" height="1" fill="#9aa46a"/><rect x="316" y="175" width="1" height="1" fill="#9aa46a"/><rect x="312" y="166" width="1" height="1" fill="#a9ad7a"/><rect x="317" y="165" width="1" height="1" fill="#9aa46a"/><rect x="299" y="169" width="1" height="1" fill="#b3b287"/><rect x="308" y="174" width="1" height="1" fill="#a9ad7a"/><rect x="298" y="156" width="1" height="1" fill="#b3b287"/><rect x="298" y="180" width="1" height="1" fill="#5e7038"/><rect x="313" y="159" width="1" height="1" fill="#5e7038"/><rect x="298" y="156" width="1" height="1" fill="#5e7038"/><rect x="298" y="155" width="1" height="1" fill="#a9ad7a"/><rect x="305" y="160" width="1" height="1" fill="#9aa46a"/><rect x="297" y="161" width="1" height="1" fill="#a9ad7a"/><rect x="304" y="167" width="1" height="1" fill="#9aa46a"/><rect x="308" y="159" width="1" height="1" fill="#5e7038"/><rect x="304" y="174" width="1" height="1" fill="#a9ad7a"/><rect x="299" y="163" width="1" height="1" fill="#5e7038"/><rect x="299" y="160" width="1" height="1" fill="#a9ad7a"/><rect x="306" y="178" width="1" height="1" fill="#b3b287"/><rect x="302" y="173" width="1" height="1" fill="#b3b287"/><rect x="302" y="160" width="1" height="1" fill="#5e7038"/><rect x="319" y="163" width="1" height="1" fill="#a9ad7a"/><rect x="306" y="156" width="1" height="1" fill="#b3b287"/><rect x="300" y="177" width="1" height="1" fill="#b3b287"/><rect x="314" y="157" width="1" height="1" fill="#a9ad7a"/><rect x="311" y="167" width="1" height="1" fill="#9aa46a"/><rect x="301" y="166" width="1" height="1" fill="#a9ad7a"/><rect x="308" y="160" width="1" height="1" fill="#9aa46a"/><rect x="304" y="158" width="1" height="1" fill="#9aa46a"/><rect x="300" y="169" width="1" height="1" fill="#9aa46a"/><rect x="312" y="159" width="1" height="1" fill="#a9ad7a"/><rect x="302" y="171" width="1" height="1" fill="#5e7038"/><rect x="306" y="176" width="1" height="1" fill="#b3b287"/><rect x="303" y="170" width="1" height="1" fill="#9aa46a"/><rect x="299" y="163" width="1" height="1" fill="#a9ad7a"/><rect x="309" y="170" width="1" height="1" fill="#b3b287"/><rect x="316" y="176" width="1" height="1" fill="#5e7038"/><rect x="298" y="173" width="1" height="1" fill="#5e7038"/><rect x="306" y="178" width="1" height="1" fill="#b3b287"/></g>
<!-- far left wall -->
<rect x="0" y="0" width="13" height="92" fill="#4f4b49"/>
<rect x="0" y="0" width="2.5" height="165" fill="#4a5262"/>
<g stroke="#9a948a" stroke-width="1" opacity="0.7"><path d="M2 4H13 M2 9H13 M2 48H13 M2 54H13 M2 60H13 M2 66H13 M2 72H13 M2 78L14 74 M2 84L15 80"/></g>
<!-- lantern -->
<rect x="2" y="23" width="11" height="20" fill="#383c46"/>
<path d="M2 23 L7.5 16 L13 23 Z" fill="#7a9a90"/>
<rect x="4" y="26" width="7" height="14" fill="#4c505c"/>
<!-- main pillar -->
<rect x="10" y="0" width="38" height="62" fill="url(#pil)"/>
<g stroke="#98928a" stroke-width="1" opacity="0.7" fill="none">
<path d="M15 0V43 M20 0V43 M26 0V43 M32 0V43 M38 0V43 M43 0V43 M10 44H48 M10 49H48 M10 55H48"/>
</g>
<!-- right brick column -->
<rect x="45" y="0" width="20" height="42" fill="#58514c"/>
<g stroke="#8f887d" stroke-width="1.2" opacity="0.8"><path d="M45 4H65 M45 10H65 M45 16H65 M47 27L64 22 M48 35L65 30"/></g>
<rect x="48" y="40" width="18" height="14" fill="#b0aa9d"/>
<rect x="48" y="46" width="18" height="1.2" fill="#8d877c"/>
<rect x="66" y="41" width="14" height="11" fill="#4e555c"/>
<!-- stone platform and steps -->
<path d="M12 62 L48 62 L48 54 L66 52 L114 54 L72 122 L0 122 L0 95 L12 95 Z" fill="#b1ab9f"/>
<path d="M14 62 L48 62 L48 54 L80 52 L44 99 L0 99 L0 92 L14 90 Z" fill="#bcb6aa"/>
<g stroke="#8c877d" stroke-width="1.3" fill="none">
<path d="M80 52 L44 99 L0 99"/>
<path d="M92 53 L56 105 L0 105"/>
<path d="M104 54 L65 112 L0 112"/>
</g>
<path d="M114 54 L72 122 L0 122" stroke="#9a958a" stroke-width="1" fill="none"/>
<!-- left pillar base -->
<path d="M0 84 L12 84 L14 92 L0 94 Z" fill="#6a6663"/>
<path d="M0 88 L14 91 L15 94 L0 92 Z" fill="#b0aca2"/>
<rect x="0" y="122" width="5" height="42" fill="#50565c"/>
<!-- person 1 -->
<path d="M4 102 Q5 99.5 8 100 L12 100.5 Q17 103 18 110 L19 126 L14 128 L8 128 Q4 126 4 118 Z" fill="#252b3c"/>
<circle cx="8.5" cy="97.8" r="2.6" fill="#3c3230"/>
<path d="M8.5 127 L12.5 127 L12 138 L9 138 Z" fill="#252b3c"/>
<path d="M13 125 L17.5 125 L26.5 132 L25 135.5 Z" fill="#252b3c"/>
<rect x="8.5" y="137.5" width="4" height="1.8" fill="#b8b8b8"/>
<!-- person 2 -->
<path d="M23 107 Q24 105 27 105 L31 105 L35 109 L35 130 L26 130 L24 118 Z" fill="#2e333b"/>
<circle cx="26.5" cy="102.5" r="2.8" fill="#3e3028"/>
<path d="M34 105 L41 106 L43 112 L43 126 L36 127 Z" fill="#283050"/>
<rect x="38.5" y="110" width="4" height="12" fill="#3a5cae"/>
<path d="M27 130 L31.5 130 L30.5 148.5 L27 148.5 Z" fill="#3b4a72"/>
<path d="M31 130 L35 130 L44 145.5 L40.5 147.5 Z" fill="#35436a"/>
<rect x="25" y="148" width="6" height="2" fill="#cfcfcf"/><rect x="39" y="146" width="6" height="2" fill="#cfcfcf"/>
<!-- person 3 (right) -->
<rect x="294" y="23" width="3.5" height="7" fill="#2a2e36"/>
<path d="M297 21.5 L302.5 21 L303.5 32 L297.5 32 Z" fill="#76b8d0"/>
<path d="M298.5 32 L303 32 L302.5 45 L300.5 45 L300 38 L299.5 45 L298 45 Z" fill="#262c3e"/>
<circle cx="300" cy="19" r="2" fill="#5e4a40"/>
</svg>
</div>
<div class="a" style="left:383px;top:473px;width:558px;height:1px;background:#a3adba"></div>
<div class="a" style="left:383px;top:474px;width:558px;height:18px;background:#f4f4f4"></div>
<div class="pb" style="left:384px;width:68px">+</div>
<div class="pb" style="left:454px;width:68px">-</div>
<div class="a" style="left:452px;top:474px;width:2px;height:18px;background:#9c9c9c"></div>
<div class="pb" style="left:524px;width:67px">&lt; &lt;</div>
<div class="a" style="left:522px;top:474px;width:2px;height:18px;background:#9c9c9c"></div>
<div class="pb" style="left:593px;width:68px">&lt;</div>
<div class="a" style="left:591px;top:474px;width:2px;height:18px;background:#9c9c9c"></div>
<div class="pb blu" style="left:663px;width:68px">1</div>
<div class="a" style="left:661px;top:474px;width:2px;height:18px;background:#9c9c9c"></div>
<div class="pb blu" style="left:733px;width:68px">1</div>
<div class="a" style="left:731px;top:474px;width:2px;height:18px;background:#9c9c9c"></div>
<div class="pb" style="left:803px;width:67px">&gt;</div>
<div class="a" style="left:801px;top:474px;width:2px;height:18px;background:#9c9c9c"></div>
<div class="pb" style="left:872px;width:68px">&gt; &gt;</div>
<div class="a" style="left:870px;top:474px;width:2px;height:18px;background:#9c9c9c"></div>
<div class="a" style="left:104px;top:492px;width:837px;height:2px;background:#8a8a8a"></div>
<div class="a" style="left:11px;top:493px;width:93px;height:1px;background:#7a8593"></div>
<div class="a" style="left:104px;top:494px;width:837px;height:25px;background:#f4f4f4;border-left:1px solid #9a9a9a"></div>
<div class="a" style="left:11px;top:520px;width:930px;height:1px;background:#808080"></div><div class="a" style="left:104px;top:519px;width:837px;height:1px;background:#9a9a9a"></div>
<div class="a" style="left:940px;top:293px;width:1px;height:228px;background:#999"></div>
<div class="a send" style="left:104px;top:501px;width:837px">Send</div>
</body></html>
